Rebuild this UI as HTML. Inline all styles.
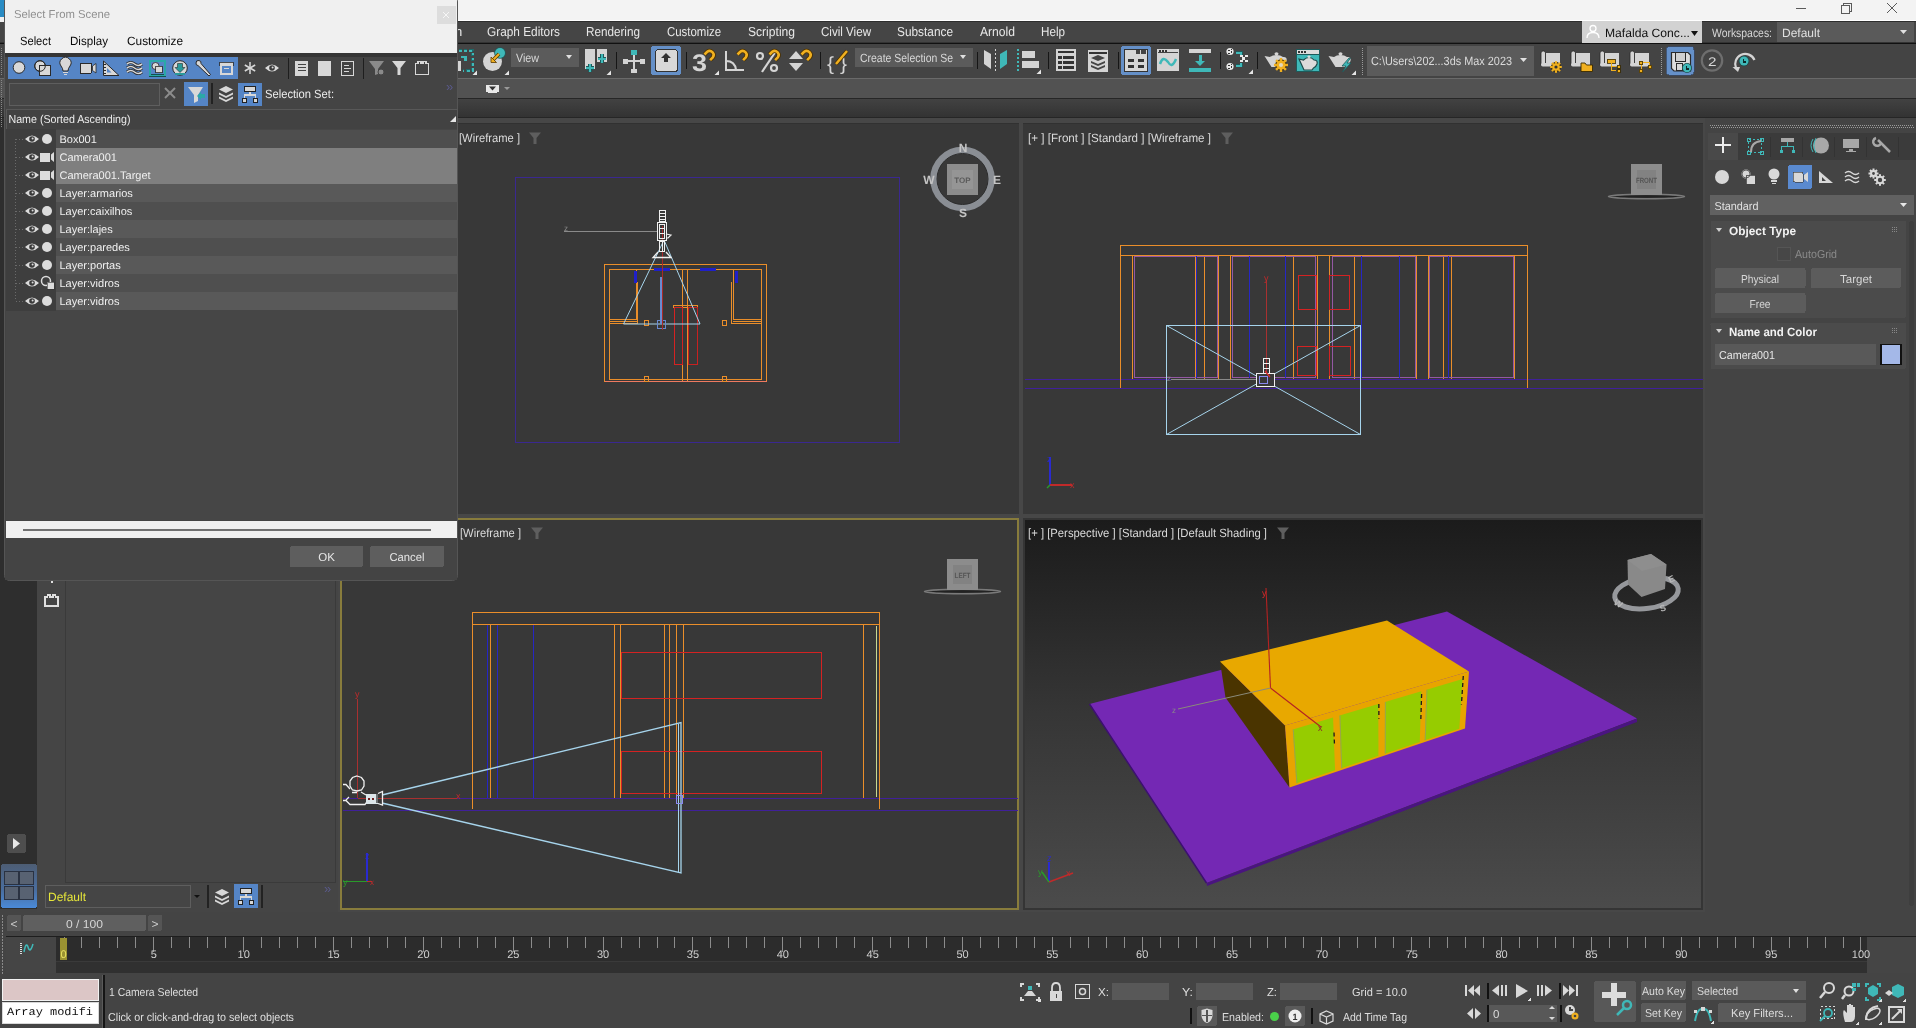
<!DOCTYPE html>
<html><head><meta charset="utf-8"><title>3ds Max</title>
<style>html,body{margin:0;padding:0;width:1916px;height:1028px;overflow:hidden;background:#444}svg{display:block}text{white-space:pre}svg{will-change:transform}</style></head>
<body><svg width="1916" height="1028" viewBox="0 0 1916 1028" shape-rendering="crispEdges" text-rendering="geometricPrecision">
<rect x="0" y="0" width="1916" height="1028" fill="#444444" />
<rect x="0" y="0" width="1916" height="21" fill="#f3f3f3" />
<line x1="1796" y1="8.5" x2="1806" y2="8.5" stroke="#5a5a5a" stroke-width="1" />
<rect x="1841.5" y="5.5" width="8" height="8" fill="none" stroke="#5a5a5a" stroke-width="1" />
<polyline points="1843.5,5.5 1843.5,3.5 1851.5,3.5 1851.5,11.5 1849.5,11.5" fill="none" stroke="#5a5a5a" stroke-width="1" />
<line x1="1887" y1="3" x2="1897" y2="13" stroke="#5a5a5a" stroke-width="1" shape-rendering="geometricPrecision"/>
<line x1="1897" y1="3" x2="1887" y2="13" stroke="#5a5a5a" stroke-width="1" shape-rendering="geometricPrecision"/>
<rect x="0" y="20" width="1916" height="1" fill="#ffffff" />
<rect x="0" y="21" width="1916" height="22" fill="#454545" />
<rect x="0" y="21" width="1916" height="1" fill="#2e2e2e" />
<rect x="0" y="42" width="1916" height="1" fill="#333333" />
<rect x="0" y="43" width="1916" height="1" fill="#111111" />
<rect x="0" y="44" width="1916" height="34" fill="#444444" />
<rect x="0" y="78" width="1916" height="1" fill="#6a6a6a" />
<rect x="0" y="79" width="1916" height="19" fill="#525252" />
<rect x="0" y="98" width="1916" height="1" fill="#262626" />
<defs><linearGradient id="r3" x1="0" y1="0" x2="0" y2="1"><stop offset="0" stop-color="#424242"/><stop offset="1" stop-color="#333333"/></linearGradient></defs>
<rect x="0" y="99" width="1916" height="18" fill="url(#r3)" />
<rect x="0" y="117" width="1916" height="1" fill="#262626" />
<rect x="0" y="118" width="37" height="791" fill="#2e2e2e" />
<rect x="37" y="118" width="303" height="794" fill="#454545" />
<rect x="65" y="118" width="1" height="764" fill="#3b3b3b" />
<rect x="338" y="118" width="1367" height="794" fill="#474747" />
<rect x="342" y="123" width="677" height="391" fill="#383838" />
<rect x="1023" y="123" width="680" height="391" fill="#383838" />
<rect x="342" y="123" width="677" height="1" fill="#313131" />
<rect x="1023" y="123" width="680" height="1" fill="#313131" />
<rect x="340" y="518" width="679" height="392" fill="#383838" />
<rect x="341" y="519" width="677" height="390" fill="none" stroke="#887c3c" stroke-width="2" />
<defs><linearGradient id="pg" x1="0" y1="0" x2="0" y2="1"><stop offset="0" stop-color="#1b1b1b"/><stop offset="0.5" stop-color="#363636"/><stop offset="1" stop-color="#4b4b4b"/></linearGradient></defs>
<rect x="1023" y="518" width="680" height="392" fill="#353535" />
<rect x="1025" y="520" width="676" height="388" fill="url(#pg)" />
<rect x="1705" y="118" width="211" height="818" fill="#444444" />
<rect x="0" y="912" width="1916" height="24" fill="#444444" />
<rect x="0" y="936" width="1916" height="37" fill="#444444" />
<rect x="6" y="936" width="1910" height="1" fill="#1e1e1e" />
<rect x="56" y="937" width="1860" height="25" fill="#2c2c2c" />
<rect x="56" y="962" width="1860" height="11" fill="#303030" />
<rect x="0" y="973" width="1916" height="55" fill="#444444" />
<text x="455" y="36.3" fill="#e8e8e8" font-size="13" font-family="Liberation Sans" font-weight="normal" text-anchor="start" >n</text>
<text x="487" y="36.3" fill="#e8e8e8" font-size="13" font-family="Liberation Sans" font-weight="normal" text-anchor="start" textLength="73" lengthAdjust="spacingAndGlyphs" >Graph Editors</text>
<text x="586" y="36.3" fill="#e8e8e8" font-size="13" font-family="Liberation Sans" font-weight="normal" text-anchor="start" textLength="54" lengthAdjust="spacingAndGlyphs" >Rendering</text>
<text x="667" y="36.3" fill="#e8e8e8" font-size="13" font-family="Liberation Sans" font-weight="normal" text-anchor="start" textLength="54" lengthAdjust="spacingAndGlyphs" >Customize</text>
<text x="748" y="36.3" fill="#e8e8e8" font-size="13" font-family="Liberation Sans" font-weight="normal" text-anchor="start" textLength="47" lengthAdjust="spacingAndGlyphs" >Scripting</text>
<text x="821" y="36.3" fill="#e8e8e8" font-size="13" font-family="Liberation Sans" font-weight="normal" text-anchor="start" textLength="50" lengthAdjust="spacingAndGlyphs" >Civil View</text>
<text x="897" y="36.3" fill="#e8e8e8" font-size="13" font-family="Liberation Sans" font-weight="normal" text-anchor="start" textLength="56" lengthAdjust="spacingAndGlyphs" >Substance</text>
<text x="980" y="36.3" fill="#e8e8e8" font-size="13" font-family="Liberation Sans" font-weight="normal" text-anchor="start" textLength="35" lengthAdjust="spacingAndGlyphs" >Arnold</text>
<text x="1041" y="36.3" fill="#e8e8e8" font-size="13" font-family="Liberation Sans" font-weight="normal" text-anchor="start" textLength="24" lengthAdjust="spacingAndGlyphs" >Help</text>
<rect x="1582" y="21" width="120" height="22" fill="#d2d2d2" />
<circle cx="1593" cy="28.5" r="3" fill="none" stroke="#ffffff" stroke-width="1.3" shape-rendering="geometricPrecision"/>
<path d="M1587,38 Q1587,32.5 1593,32.5 Q1599,32.5 1599,38" fill="none" stroke="#ffffff" stroke-width="1.3" shape-rendering="geometricPrecision"/>
<text x="1605" y="37" fill="#111111" font-size="12" font-family="Liberation Sans" font-weight="normal" text-anchor="start" textLength="85" lengthAdjust="spacingAndGlyphs" >Mafalda Conc...</text>
<polygon points="1691,31 1698,31 1694.5,36" fill="#111111" stroke="none" stroke-width="1" shape-rendering="geometricPrecision"/>
<text x="1712" y="37" fill="#d6d6d6" font-size="12" font-family="Liberation Sans" font-weight="normal" text-anchor="start" textLength="60" lengthAdjust="spacingAndGlyphs" >Workspaces:</text>
<rect x="1777" y="22" width="137" height="20" fill="#5a5a5a" />
<text x="1782" y="37" fill="#e0e0e0" font-size="12" font-family="Liberation Sans" font-weight="normal" text-anchor="start" textLength="38" lengthAdjust="spacingAndGlyphs" >Default</text>
<polygon points="1900,30 1907,30 1903.5,34" fill="#e0e0e0" stroke="none" stroke-width="1" shape-rendering="geometricPrecision"/>
<rect x="457" y="61" width="4" height="10" fill="#d4d4d4" />
<path d="M459,50.5 H472.5 V70.5 H463" fill="none" stroke="#1e6a6a" stroke-width="3.2" stroke-dasharray="3.2,2"/>
<path d="M459,50.5 H472.5 V70.5 H463" fill="none" stroke="#3fb8b8" stroke-width="2" stroke-dasharray="2.5,2.7"/>
<path d="M461,57 H465.5 V61" fill="none" stroke="#3fb8b8" stroke-width="2.2" />
<polygon points="477,75 472.5,75 477,70.5" fill="#e6e6e6" stroke="none" stroke-width="1" shape-rendering="geometricPrecision"/>
<circle cx="492.5" cy="61.5" r="9.5" fill="#d4d4d4" stroke="none" stroke-width="1" shape-rendering="geometricPrecision"/>
<circle cx="500" cy="53" r="5.8" fill="#1e5a5a" stroke="none" stroke-width="1" shape-rendering="geometricPrecision"/>
<circle cx="500" cy="53" r="5" fill="#3fb8b8" stroke="none" stroke-width="1" shape-rendering="geometricPrecision"/>
<line x1="499" y1="54" x2="493" y2="60" stroke="#5a3a00" stroke-width="3.5" shape-rendering="geometricPrecision"/>
<line x1="499" y1="54" x2="493" y2="60" stroke="#f0b020" stroke-width="2" shape-rendering="geometricPrecision"/>
<polygon points="491,57 491,62.5 496.5,62.5" fill="#f0b020" stroke="#5a3a00" stroke-width="0.8" shape-rendering="geometricPrecision"/>
<polygon points="509,75 504.5,75 509,70.5" fill="#e6e6e6" stroke="none" stroke-width="1" shape-rendering="geometricPrecision"/>
<rect x="511" y="48" width="68" height="19" fill="#5b5b5b" />
<text x="516" y="62" fill="#d8d8d8" font-size="12" font-family="Liberation Sans" font-weight="normal" text-anchor="start" textLength="23" lengthAdjust="spacingAndGlyphs" >View</text>
<polygon points="566,55 572,55 569,59" fill="#e0e0e0" stroke="none" stroke-width="1" shape-rendering="geometricPrecision"/>
<rect x="585" y="49" width="10" height="20" fill="#d4d4d4" />
<rect x="597" y="49" width="10" height="13" fill="#d4d4d4" />
<path d="M590,64 V72 M586,68 H594" fill="none" stroke="#1e5a5a" stroke-width="3.5" />
<path d="M590,64 V72 M586,68 H594" fill="none" stroke="#3fb8b8" stroke-width="2" />
<path d="M602,54 V63 M598,58.5 H606" fill="none" stroke="#1e5a5a" stroke-width="3.5" />
<path d="M602,54 V63 M598,58.5 H606" fill="none" stroke="#3fb8b8" stroke-width="2" />
<polygon points="611,75 606.5,75 611,70.5" fill="#e6e6e6" stroke="none" stroke-width="1" shape-rendering="geometricPrecision"/>
<rect x="615.5" y="52" width="1.2" height="17" fill="#161616" />
<line x1="634" y1="52" x2="634" y2="72" stroke="#d4d4d4" stroke-width="2" />
<line x1="624" y1="61" x2="644" y2="61" stroke="#d4d4d4" stroke-width="2" />
<rect x="631" y="50" width="6" height="5" fill="#3fb8b8" />
<rect x="623" y="59" width="5" height="5" fill="#d4d4d4" />
<rect x="640" y="59" width="5" height="5" fill="#d4d4d4" />
<rect x="631" y="69" width="6" height="4" fill="#d4d4d4" />
<rect x="651" y="46" width="30" height="29" rx="3" fill="#6590c8"/>
<rect x="655.5" y="49.5" width="22" height="22" rx="3" fill="#d8d8d8" stroke="#333" stroke-width="1"/>
<polygon points="666,53 671,58 668,58 668,62 664,62 664,58 661,58" fill="#333" stroke="none" stroke-width="1" shape-rendering="geometricPrecision"/>
<rect x="685.5" y="52" width="1.2" height="17" fill="#161616" />
<text x="692" y="71" fill="#d4d4d4" font-size="24" font-family="Liberation Sans" font-weight="bold" text-anchor="start" textLength="15" lengthAdjust="spacingAndGlyphs" >3</text>
<path d="M704.5,54.5 L707.2,51.8 A4,4 0 0 1 712.8,57.4 L710.1,60.1" fill="none" stroke="#4a3000" stroke-width="4.2" shape-rendering="geometricPrecision" stroke-linecap="butt"/>
<path d="M704.5,54.5 L707.2,51.8 A4,4 0 0 1 712.8,57.4 L710.1,60.1" fill="none" stroke="#f0b020" stroke-width="2.6" shape-rendering="geometricPrecision" stroke-linecap="butt"/>
<polygon points="719,75 714.5,75 719,70.5" fill="#e6e6e6" stroke="none" stroke-width="1" shape-rendering="geometricPrecision"/>
<path d="M726,51 V70 H744" fill="none" stroke="#d4d4d4" stroke-width="2.2" />
<path d="M726,61 Q735,61 736,70" fill="none" stroke="#d4d4d4" stroke-width="2.2" shape-rendering="geometricPrecision"/>
<path d="M737.5,54.5 L740.2,51.8 A4,4 0 0 1 745.8,57.4 L743.1,60.1" fill="none" stroke="#4a3000" stroke-width="4.2" shape-rendering="geometricPrecision" stroke-linecap="butt"/>
<path d="M737.5,54.5 L740.2,51.8 A4,4 0 0 1 745.8,57.4 L743.1,60.1" fill="none" stroke="#f0b020" stroke-width="2.6" shape-rendering="geometricPrecision" stroke-linecap="butt"/>
<circle cx="760" cy="56" r="3" fill="none" stroke="#d4d4d4" stroke-width="2.2" shape-rendering="geometricPrecision"/>
<circle cx="774" cy="68" r="3" fill="none" stroke="#d4d4d4" stroke-width="2.2" shape-rendering="geometricPrecision"/>
<line x1="762" y1="72" x2="776" y2="51" stroke="#d4d4d4" stroke-width="2.2" shape-rendering="geometricPrecision"/>
<path d="M769.5,54.5 L772.2,51.8 A4,4 0 0 1 777.8,57.4 L775.1,60.1" fill="none" stroke="#4a3000" stroke-width="4.2" shape-rendering="geometricPrecision" stroke-linecap="butt"/>
<path d="M769.5,54.5 L772.2,51.8 A4,4 0 0 1 777.8,57.4 L775.1,60.1" fill="none" stroke="#f0b020" stroke-width="2.6" shape-rendering="geometricPrecision" stroke-linecap="butt"/>
<polygon points="796,51 803,59 789,59" fill="#d4d4d4" stroke="none" stroke-width="1" shape-rendering="geometricPrecision"/>
<polygon points="789,63 803,63 796,71" fill="#d4d4d4" stroke="none" stroke-width="1" shape-rendering="geometricPrecision"/>
<path d="M801.5,54.5 L804.2,51.8 A4,4 0 0 1 809.8,57.4 L807.1,60.1" fill="none" stroke="#4a3000" stroke-width="4.2" shape-rendering="geometricPrecision" stroke-linecap="butt"/>
<path d="M801.5,54.5 L804.2,51.8 A4,4 0 0 1 809.8,57.4 L807.1,60.1" fill="none" stroke="#f0b020" stroke-width="2.6" shape-rendering="geometricPrecision" stroke-linecap="butt"/>
<rect x="819.5" y="52" width="1.2" height="17" fill="#161616" />
<text x="827" y="70" fill="#d4d4d4" font-size="19" font-family="Liberation Sans" font-weight="normal" text-anchor="start" textLength="7" lengthAdjust="spacingAndGlyphs" >{</text>
<text x="840" y="70" fill="#d4d4d4" font-size="19" font-family="Liberation Sans" font-weight="normal" text-anchor="start" textLength="7" lengthAdjust="spacingAndGlyphs" >}</text>
<line x1="836" y1="64" x2="847" y2="51" stroke="#4a3000" stroke-width="4" shape-rendering="geometricPrecision"/>
<line x1="836" y1="64" x2="847" y2="51" stroke="#f0b020" stroke-width="2.5" shape-rendering="geometricPrecision"/>
<rect x="855" y="48" width="118" height="19" fill="#5b5b5b" />
<text x="860" y="62" fill="#d8d8d8" font-size="12" font-family="Liberation Sans" font-weight="normal" text-anchor="start" textLength="93" lengthAdjust="spacingAndGlyphs" >Create Selection Se</text>
<polygon points="960,55 966,55 963,59" fill="#e0e0e0" stroke="none" stroke-width="1" shape-rendering="geometricPrecision"/>
<rect x="977" y="52" width="1.2" height="17" fill="#161616" />
<polygon points="984,50 991,54 991,69 984,64" fill="#d4d4d4" stroke="none" stroke-width="1" shape-rendering="geometricPrecision"/>
<line x1="995.5" y1="49" x2="995.5" y2="72" stroke="#d4d4d4" stroke-width="1.5" stroke-dasharray="2,2"/>
<polygon points="1007,50 1000,54 1000,69 1007,64" fill="#3fb8b8" stroke="none" stroke-width="1" shape-rendering="geometricPrecision"/>
<line x1="1018" y1="49" x2="1018" y2="72" stroke="#3fb8b8" stroke-width="1.5" stroke-dasharray="2,2"/>
<rect x="1022" y="51" width="13" height="7" fill="#d4d4d4" />
<rect x="1022" y="61" width="17" height="7" fill="#d4d4d4" />
<polygon points="1041,74 1036.5,74 1041,69.5" fill="#e6e6e6" stroke="none" stroke-width="1" shape-rendering="geometricPrecision"/>
<rect x="1047.5" y="52" width="1.2" height="17" fill="#161616" />
<rect x="1056" y="49" width="20" height="22" fill="#d4d4d4" />
<rect x="1058" y="51" width="16" height="2" fill="#333" />
<rect x="1058" y="56" width="3.5" height="2.5" fill="#333" />
<rect x="1063" y="56" width="11" height="2.5" fill="#333" />
<rect x="1058" y="61" width="3.5" height="2.5" fill="#333" />
<rect x="1063" y="61" width="11" height="2.5" fill="#333" />
<rect x="1058" y="66" width="3.5" height="2.5" fill="#333" />
<rect x="1063" y="66" width="11" height="2.5" fill="#333" />
<rect x="1088" y="50" width="20" height="22" fill="#d4d4d4" />
<rect x="1089" y="52" width="18" height="2" fill="#333" />
<polygon points="1098,55 1105,58 1098,61 1091,58" fill="#444" stroke="none" stroke-width="1" shape-rendering="geometricPrecision"/>
<polygon points="1091,61 1098,64 1105,61 1105,63 1098,66 1091,63" fill="#444" stroke="none" stroke-width="1" shape-rendering="geometricPrecision"/>
<polygon points="1091,65 1098,68 1105,65 1105,67 1098,70 1091,67" fill="#444" stroke="none" stroke-width="1" shape-rendering="geometricPrecision"/>
<rect x="1118" y="52" width="1.2" height="17" fill="#161616" />
<rect x="1121" y="46" width="30" height="29" rx="3" fill="#6590c8"/>
<rect x="1124" y="50" width="24" height="22" fill="#d4d4d4" />
<rect x="1125" y="51" width="22" height="20" fill="#d6d6d6" />
<rect x="1124.5" y="49.5" width="23" height="22" fill="none" stroke="#333" stroke-width="1" />
<rect x="1136" y="50" width="4" height="4" fill="#444" />
<rect x="1141" y="50" width="5" height="4" fill="#444" />
<rect x="1128" y="59" width="6" height="3" fill="#333" />
<rect x="1138" y="59" width="6" height="3" fill="#333" />
<rect x="1128" y="65" width="6" height="3" fill="#333" />
<rect x="1138" y="65" width="6" height="3" fill="#333" />
<rect x="1157" y="49" width="22" height="22" fill="#d4d4d4" />
<rect x="1158" y="52" width="20" height="1" fill="#444" />
<rect x="1159" y="50" width="2" height="2" fill="#333" />
<rect x="1162" y="50" width="2" height="2" fill="#333" />
<rect x="1165" y="50" width="2" height="2" fill="#333" />
<path d="M1160,64 Q1163,55 1168,62 Q1172,69 1176,59" fill="none" stroke="#3fb8b8" stroke-width="2.5" shape-rendering="geometricPrecision"/>
<rect x="1189" y="49" width="22" height="4" fill="#d4d4d4" />
<rect x="1189" y="68" width="22" height="4" fill="#3fb8b8" />
<line x1="1200" y1="55" x2="1200" y2="63" stroke="#3fb8b8" stroke-width="3" />
<polygon points="1195,61 1205,61 1200,66" fill="#3fb8b8" stroke="none" stroke-width="1" shape-rendering="geometricPrecision"/>
<rect x="1220" y="52" width="1.2" height="17" fill="#161616" />
<circle cx="1230" cy="51.5" r="3.6" fill="#e8e8e8" stroke="none" stroke-width="1" shape-rendering="geometricPrecision"/>
<rect x="1228" y="49.5" width="1.5" height="1.5" fill="#333" />
<rect x="1230.5" y="51.0" width="1.5" height="1.5" fill="#333" />
<rect x="1228" y="52.5" width="1.5" height="1.5" fill="#333" />
<rect x="1231" y="48.5" width="1.2" height="1.2" fill="#333" />
<circle cx="1230" cy="66.5" r="3.6" fill="#e8e8e8" stroke="none" stroke-width="1" shape-rendering="geometricPrecision"/>
<rect x="1228" y="64.5" width="1.5" height="1.5" fill="#333" />
<rect x="1230.5" y="66.0" width="1.5" height="1.5" fill="#333" />
<rect x="1228" y="67.5" width="1.5" height="1.5" fill="#333" />
<rect x="1231" y="63.5" width="1.2" height="1.2" fill="#333" />
<path d="M1236,52.5 H1241 V55.5 M1236,65.5 H1241 V62.5" fill="none" stroke="#1e5a5a" stroke-width="3" />
<path d="M1236,52.5 H1241 V55.5 M1236,65.5 H1241 V62.5" fill="none" stroke="#3fb8b8" stroke-width="2" />
<rect x="1239.5" y="54.8" width="3" height="2.4" fill="#e8e8e8" />
<rect x="1244.5" y="54.8" width="3" height="2.4" fill="#e8e8e8" />
<rect x="1242.0" y="57.3" width="3" height="2.4" fill="#e8e8e8" />
<rect x="1239.5" y="59.8" width="3" height="2.4" fill="#e8e8e8" />
<rect x="1244.5" y="59.8" width="3" height="2.4" fill="#e8e8e8" />
<polygon points="1253,74 1248.5,74 1253,69.5" fill="#e6e6e6" stroke="none" stroke-width="1" shape-rendering="geometricPrecision"/>
<rect x="1257" y="52" width="1.2" height="17" fill="#161616" />
<path d="M1264.5,56 L1270.0,57 Q1272.5,55 1276.5,55 Q1280.5,55 1283.0,57 Q1287.5,56.5 1286.5,61 Q1285.5,64 1283.0,65 L1281.0,67 L1271.5,67 Z" fill="#d4d4d4" stroke="none" stroke-width="1" shape-rendering="geometricPrecision"/>
<ellipse cx="1276.5" cy="53.8" rx="2" ry="1.6" fill="#d4d4d4" shape-rendering="geometricPrecision"/>
<circle cx="1281" cy="65" r="5.8" fill="#3a2a00" stroke="none" stroke-width="1" shape-rendering="geometricPrecision"/>
<rect x="1279.8" y="58" width="2.4" height="3" fill="#f0b020" transform="rotate(0 1281 65)" shape-rendering="geometricPrecision"/>
<rect x="1279.8" y="58" width="2.4" height="3" fill="#f0b020" transform="rotate(45 1281 65)" shape-rendering="geometricPrecision"/>
<rect x="1279.8" y="58" width="2.4" height="3" fill="#f0b020" transform="rotate(90 1281 65)" shape-rendering="geometricPrecision"/>
<rect x="1279.8" y="58" width="2.4" height="3" fill="#f0b020" transform="rotate(135 1281 65)" shape-rendering="geometricPrecision"/>
<rect x="1279.8" y="58" width="2.4" height="3" fill="#f0b020" transform="rotate(180 1281 65)" shape-rendering="geometricPrecision"/>
<rect x="1279.8" y="58" width="2.4" height="3" fill="#f0b020" transform="rotate(225 1281 65)" shape-rendering="geometricPrecision"/>
<rect x="1279.8" y="58" width="2.4" height="3" fill="#f0b020" transform="rotate(270 1281 65)" shape-rendering="geometricPrecision"/>
<rect x="1279.8" y="58" width="2.4" height="3" fill="#f0b020" transform="rotate(315 1281 65)" shape-rendering="geometricPrecision"/>
<circle cx="1281" cy="65" r="4.6" fill="#f0b020" stroke="none" stroke-width="1" shape-rendering="geometricPrecision"/>
<circle cx="1281" cy="65" r="2" fill="#e0d8c0" stroke="none" stroke-width="1" shape-rendering="geometricPrecision"/>
<rect x="1296" y="48.5" width="24" height="23" fill="#1e5a5a" />
<rect x="1297" y="49.5" width="22" height="4.5" fill="#dcdcdc" />
<rect x="1298" y="50.5" width="2" height="2.5" fill="#333" />
<rect x="1301" y="50.5" width="2" height="2.5" fill="#333" />
<rect x="1304" y="50.5" width="2" height="2.5" fill="#333" />
<rect x="1297" y="55" width="22" height="16" fill="#3fb8b8" />
<path d="M1299,59 L1303.5,60 Q1306,57.5 1309,57.5 Q1312,57.5 1314,60 Q1318,60 1317,64 Q1316,67 1313.5,68 L1312,70 L1304,70 Z" fill="#dcdcdc" stroke="#1e4a4a" stroke-width="1.2" shape-rendering="geometricPrecision"/>
<ellipse cx="1309" cy="56.8" rx="1.6" ry="1.3" fill="#dcdcdc" shape-rendering="geometricPrecision"/>
<path d="M1328.5,56 L1334.0,57 Q1336.5,55 1340.5,55 Q1344.5,55 1347.0,57 Q1351.5,56.5 1350.5,61 Q1349.5,64 1347.0,65 L1345.0,67 L1335.5,67 Z" fill="#d4d4d4" stroke="none" stroke-width="1" shape-rendering="geometricPrecision"/>
<ellipse cx="1340.5" cy="53.8" rx="2" ry="1.6" fill="#d4d4d4" shape-rendering="geometricPrecision"/>
<polygon points="1349,58 1342,66 1346,66 1342.5,72 1351,63 1347,63 1350.5,58" fill="#3fb8b8" stroke="#1e5a5a" stroke-width="0.8" shape-rendering="geometricPrecision"/>
<polygon points="1356,75 1351.5,75 1356,70.5" fill="#e6e6e6" stroke="none" stroke-width="1" shape-rendering="geometricPrecision"/>
<rect x="1361.5" y="48" width="1.2" height="1.2" fill="#9a9a9a" />
<rect x="1361.5" y="50" width="1.2" height="1.2" fill="#9a9a9a" />
<rect x="1361.5" y="52" width="1.2" height="1.2" fill="#9a9a9a" />
<rect x="1361.5" y="54" width="1.2" height="1.2" fill="#9a9a9a" />
<rect x="1361.5" y="56" width="1.2" height="1.2" fill="#9a9a9a" />
<rect x="1361.5" y="58" width="1.2" height="1.2" fill="#9a9a9a" />
<rect x="1361.5" y="60" width="1.2" height="1.2" fill="#9a9a9a" />
<rect x="1361.5" y="62" width="1.2" height="1.2" fill="#9a9a9a" />
<rect x="1361.5" y="64" width="1.2" height="1.2" fill="#9a9a9a" />
<rect x="1361.5" y="66" width="1.2" height="1.2" fill="#9a9a9a" />
<rect x="1361.5" y="68" width="1.2" height="1.2" fill="#9a9a9a" />
<rect x="1361.5" y="70" width="1.2" height="1.2" fill="#9a9a9a" />
<rect x="1361.5" y="72" width="1.2" height="1.2" fill="#9a9a9a" />
<rect x="1361.5" y="74" width="1.2" height="1.2" fill="#9a9a9a" />
<rect x="1367" y="46" width="167" height="30" fill="#5b5b5b" />
<text x="1371" y="65" fill="#dadada" font-size="12" font-family="Liberation Sans" font-weight="normal" text-anchor="start" textLength="141" lengthAdjust="spacingAndGlyphs" >C:\Users\202...3ds Max 2023</text>
<polygon points="1520,58 1527,58 1523.5,62" fill="#e0e0e0" stroke="none" stroke-width="1" shape-rendering="geometricPrecision"/>
<rect x="1541" y="51" width="4.5" height="15.5" rx="2" fill="#d4d4d4" stroke="#2a2a2a" stroke-width="0.8" shape-rendering="geometricPrecision"/>
<rect x="1546" y="52.5" width="13.5" height="13.5" fill="#d4d4d4" />
<rect x="1541" y="63" width="18.5" height="3.5" rx="1.7" fill="#d4d4d4" shape-rendering="geometricPrecision"/>
<circle cx="1556" cy="67" r="5" fill="#3a2a00" stroke="none" stroke-width="1" shape-rendering="geometricPrecision"/>
<rect x="1555" y="61.2" width="2" height="2.5" fill="#f0b020" transform="rotate(0 1556 67)" shape-rendering="geometricPrecision"/>
<rect x="1555" y="61.2" width="2" height="2.5" fill="#f0b020" transform="rotate(45 1556 67)" shape-rendering="geometricPrecision"/>
<rect x="1555" y="61.2" width="2" height="2.5" fill="#f0b020" transform="rotate(90 1556 67)" shape-rendering="geometricPrecision"/>
<rect x="1555" y="61.2" width="2" height="2.5" fill="#f0b020" transform="rotate(135 1556 67)" shape-rendering="geometricPrecision"/>
<rect x="1555" y="61.2" width="2" height="2.5" fill="#f0b020" transform="rotate(180 1556 67)" shape-rendering="geometricPrecision"/>
<rect x="1555" y="61.2" width="2" height="2.5" fill="#f0b020" transform="rotate(225 1556 67)" shape-rendering="geometricPrecision"/>
<rect x="1555" y="61.2" width="2" height="2.5" fill="#f0b020" transform="rotate(270 1556 67)" shape-rendering="geometricPrecision"/>
<rect x="1555" y="61.2" width="2" height="2.5" fill="#f0b020" transform="rotate(315 1556 67)" shape-rendering="geometricPrecision"/>
<circle cx="1556" cy="67" r="3.8" fill="#f0b020" stroke="none" stroke-width="1" shape-rendering="geometricPrecision"/>
<circle cx="1556" cy="67" r="1.6" fill="#333" stroke="none" stroke-width="1" shape-rendering="geometricPrecision"/>
<rect x="1571" y="51" width="4.5" height="15.5" rx="2" fill="#d4d4d4" stroke="#2a2a2a" stroke-width="0.8" shape-rendering="geometricPrecision"/>
<rect x="1576" y="52.5" width="13.5" height="13.5" fill="#d4d4d4" />
<rect x="1571" y="63" width="18.5" height="3.5" rx="1.7" fill="#d4d4d4" shape-rendering="geometricPrecision"/>
<path d="M1581,63 H1585 L1586.5,65 H1592.5 V71.5 H1581 Z" fill="#f0b020" stroke="#3a2a00" stroke-width="0.9" shape-rendering="geometricPrecision"/>
<rect x="1600" y="51" width="4.5" height="15.5" rx="2" fill="#d4d4d4" stroke="#2a2a2a" stroke-width="0.8" shape-rendering="geometricPrecision"/>
<rect x="1605" y="52.5" width="13.5" height="13.5" fill="#d4d4d4" />
<rect x="1600" y="63" width="18.5" height="3.5" rx="1.7" fill="#d4d4d4" shape-rendering="geometricPrecision"/>
<rect x="1607" y="59" width="8" height="4" fill="#f0b020" stroke="#3a2a00" stroke-width="0.8" />
<path d="M1611,63 V70 H1616 M1611,66 H1616" fill="none" stroke="#f0b020" stroke-width="1" />
<rect x="1617" y="65" width="3" height="3" fill="#f0b020" stroke="#3a2a00" stroke-width="0.8" />
<rect x="1617" y="69.5" width="3" height="3" fill="#f0b020" stroke="#3a2a00" stroke-width="0.8" />
<rect x="1630" y="51" width="4.5" height="15.5" rx="2" fill="#d4d4d4" stroke="#2a2a2a" stroke-width="0.8" shape-rendering="geometricPrecision"/>
<rect x="1635" y="52.5" width="13.5" height="13.5" fill="#d4d4d4" />
<rect x="1630" y="63" width="18.5" height="3.5" rx="1.7" fill="#d4d4d4" shape-rendering="geometricPrecision"/>
<rect x="1639" y="61" width="3.5" height="3.5" fill="#f0b020" stroke="#3a2a00" stroke-width="0.8" />
<rect x="1648" y="65" width="3.5" height="3.5" fill="#f0b020" stroke="#3a2a00" stroke-width="0.8" />
<rect x="1639" y="69" width="3.5" height="3.5" fill="#f0b020" stroke="#3a2a00" stroke-width="0.8" />
<path d="M1641,65 V69 M1642.5,62.5 H1649.5 V65" fill="none" stroke="#f0b020" stroke-width="1" />
<rect x="1660.5" y="48" width="1.2" height="1.2" fill="#9a9a9a" />
<rect x="1660.5" y="50" width="1.2" height="1.2" fill="#9a9a9a" />
<rect x="1660.5" y="52" width="1.2" height="1.2" fill="#9a9a9a" />
<rect x="1660.5" y="54" width="1.2" height="1.2" fill="#9a9a9a" />
<rect x="1660.5" y="56" width="1.2" height="1.2" fill="#9a9a9a" />
<rect x="1660.5" y="58" width="1.2" height="1.2" fill="#9a9a9a" />
<rect x="1660.5" y="60" width="1.2" height="1.2" fill="#9a9a9a" />
<rect x="1660.5" y="62" width="1.2" height="1.2" fill="#9a9a9a" />
<rect x="1660.5" y="64" width="1.2" height="1.2" fill="#9a9a9a" />
<rect x="1660.5" y="66" width="1.2" height="1.2" fill="#9a9a9a" />
<rect x="1660.5" y="68" width="1.2" height="1.2" fill="#9a9a9a" />
<rect x="1660.5" y="70" width="1.2" height="1.2" fill="#9a9a9a" />
<rect x="1660.5" y="72" width="1.2" height="1.2" fill="#9a9a9a" />
<rect x="1660.5" y="74" width="1.2" height="1.2" fill="#9a9a9a" />
<rect x="1666" y="46.5" width="28" height="28.5" rx="3" fill="#6590c8" stroke="#3a4a66" stroke-width="0.8"/>
<path d="M1671.5,52.5 H1688 L1690.5,55 V71 H1674 L1671.5,68.5 Z" fill="#dcdcdc" stroke="#2a2a2a" stroke-width="1.2" shape-rendering="geometricPrecision"/>
<rect x="1675.5" y="52.5" width="10" height="8.5" fill="#d0d0d0" stroke="#2a2a2a" stroke-width="1"/>
<rect x="1676.5" y="63.5" width="6" height="6.5" fill="#d8d8d8" stroke="#2a2a2a" stroke-width="1"/>
<circle cx="1687" cy="68" r="5" fill="#1e4a4a" stroke="none" stroke-width="1" shape-rendering="geometricPrecision"/>
<circle cx="1687" cy="68" r="4.2" fill="#3fb8b8" stroke="none" stroke-width="1" shape-rendering="geometricPrecision"/>
<path d="M1686.5,65.5 V69 H1689" fill="none" stroke="#102a2a" stroke-width="1.4" />
<circle cx="1712" cy="60.5" r="10.2" fill="none" stroke="#6e6e6e" stroke-width="2.2" shape-rendering="geometricPrecision"/>
<text x="1708" y="65.5" fill="#d8d8d8" font-size="12.5" font-family="Liberation Sans" font-weight="normal" text-anchor="start" textLength="8.5" lengthAdjust="spacingAndGlyphs" >2</text>
<path d="M1736,68 A10,10 0 1 1 1754.5,60" fill="none" stroke="#d4d4d4" stroke-width="2.2" shape-rendering="geometricPrecision"/>
<polygon points="1732.5,67 1740,67 1738,72" fill="#d4d4d4" stroke="none" stroke-width="1" shape-rendering="geometricPrecision"/>
<circle cx="1744" cy="61" r="5.3" fill="#1e4a4a" stroke="none" stroke-width="1" shape-rendering="geometricPrecision"/>
<circle cx="1744" cy="61" r="4.5" fill="#3fb8b8" stroke="none" stroke-width="1" shape-rendering="geometricPrecision"/>
<path d="M1743.5,58.5 V62 H1746" fill="none" stroke="#102a2a" stroke-width="1.4" />
<rect x="486" y="84.5" width="13" height="8" rx="2" fill="#e8e8e8"/>
<polygon points="489,86.5 496,86.5 492.5,90.5" fill="#333" stroke="none" stroke-width="1" shape-rendering="geometricPrecision"/>
<polygon points="504,87 510,87 507,90" fill="#9a9a9a" stroke="none" stroke-width="1" shape-rendering="geometricPrecision"/>
<rect x="1710" y="125" width="1" height="1" fill="#9a9a9a" />
<rect x="1711" y="127" width="1" height="1" fill="#9a9a9a" />
<rect x="1712" y="125" width="1" height="1" fill="#9a9a9a" />
<rect x="1713" y="127" width="1" height="1" fill="#9a9a9a" />
<rect x="1714" y="125" width="1" height="1" fill="#9a9a9a" />
<rect x="1715" y="127" width="1" height="1" fill="#9a9a9a" />
<rect x="1716" y="125" width="1" height="1" fill="#9a9a9a" />
<rect x="1717" y="127" width="1" height="1" fill="#9a9a9a" />
<rect x="1718" y="125" width="1" height="1" fill="#9a9a9a" />
<rect x="1719" y="127" width="1" height="1" fill="#9a9a9a" />
<rect x="1720" y="125" width="1" height="1" fill="#9a9a9a" />
<rect x="1721" y="127" width="1" height="1" fill="#9a9a9a" />
<rect x="1722" y="125" width="1" height="1" fill="#9a9a9a" />
<rect x="1723" y="127" width="1" height="1" fill="#9a9a9a" />
<rect x="1724" y="125" width="1" height="1" fill="#9a9a9a" />
<rect x="1725" y="127" width="1" height="1" fill="#9a9a9a" />
<rect x="1726" y="125" width="1" height="1" fill="#9a9a9a" />
<rect x="1727" y="127" width="1" height="1" fill="#9a9a9a" />
<rect x="1728" y="125" width="1" height="1" fill="#9a9a9a" />
<rect x="1729" y="127" width="1" height="1" fill="#9a9a9a" />
<rect x="1730" y="125" width="1" height="1" fill="#9a9a9a" />
<rect x="1731" y="127" width="1" height="1" fill="#9a9a9a" />
<rect x="1732" y="125" width="1" height="1" fill="#9a9a9a" />
<rect x="1733" y="127" width="1" height="1" fill="#9a9a9a" />
<rect x="1734" y="125" width="1" height="1" fill="#9a9a9a" />
<rect x="1735" y="127" width="1" height="1" fill="#9a9a9a" />
<rect x="1736" y="125" width="1" height="1" fill="#9a9a9a" />
<rect x="1737" y="127" width="1" height="1" fill="#9a9a9a" />
<rect x="1738" y="125" width="1" height="1" fill="#9a9a9a" />
<rect x="1739" y="127" width="1" height="1" fill="#9a9a9a" />
<rect x="1740" y="125" width="1" height="1" fill="#9a9a9a" />
<rect x="1741" y="127" width="1" height="1" fill="#9a9a9a" />
<rect x="1742" y="125" width="1" height="1" fill="#9a9a9a" />
<rect x="1743" y="127" width="1" height="1" fill="#9a9a9a" />
<rect x="1744" y="125" width="1" height="1" fill="#9a9a9a" />
<rect x="1745" y="127" width="1" height="1" fill="#9a9a9a" />
<rect x="1746" y="125" width="1" height="1" fill="#9a9a9a" />
<rect x="1747" y="127" width="1" height="1" fill="#9a9a9a" />
<rect x="1748" y="125" width="1" height="1" fill="#9a9a9a" />
<rect x="1749" y="127" width="1" height="1" fill="#9a9a9a" />
<rect x="1750" y="125" width="1" height="1" fill="#9a9a9a" />
<rect x="1751" y="127" width="1" height="1" fill="#9a9a9a" />
<rect x="1752" y="125" width="1" height="1" fill="#9a9a9a" />
<rect x="1753" y="127" width="1" height="1" fill="#9a9a9a" />
<rect x="1754" y="125" width="1" height="1" fill="#9a9a9a" />
<rect x="1755" y="127" width="1" height="1" fill="#9a9a9a" />
<rect x="1756" y="125" width="1" height="1" fill="#9a9a9a" />
<rect x="1757" y="127" width="1" height="1" fill="#9a9a9a" />
<rect x="1758" y="125" width="1" height="1" fill="#9a9a9a" />
<rect x="1759" y="127" width="1" height="1" fill="#9a9a9a" />
<rect x="1760" y="125" width="1" height="1" fill="#9a9a9a" />
<rect x="1761" y="127" width="1" height="1" fill="#9a9a9a" />
<rect x="1762" y="125" width="1" height="1" fill="#9a9a9a" />
<rect x="1763" y="127" width="1" height="1" fill="#9a9a9a" />
<rect x="1764" y="125" width="1" height="1" fill="#9a9a9a" />
<rect x="1765" y="127" width="1" height="1" fill="#9a9a9a" />
<rect x="1766" y="125" width="1" height="1" fill="#9a9a9a" />
<rect x="1767" y="127" width="1" height="1" fill="#9a9a9a" />
<rect x="1768" y="125" width="1" height="1" fill="#9a9a9a" />
<rect x="1769" y="127" width="1" height="1" fill="#9a9a9a" />
<rect x="1770" y="125" width="1" height="1" fill="#9a9a9a" />
<rect x="1771" y="127" width="1" height="1" fill="#9a9a9a" />
<rect x="1772" y="125" width="1" height="1" fill="#9a9a9a" />
<rect x="1773" y="127" width="1" height="1" fill="#9a9a9a" />
<rect x="1774" y="125" width="1" height="1" fill="#9a9a9a" />
<rect x="1775" y="127" width="1" height="1" fill="#9a9a9a" />
<rect x="1776" y="125" width="1" height="1" fill="#9a9a9a" />
<rect x="1777" y="127" width="1" height="1" fill="#9a9a9a" />
<rect x="1778" y="125" width="1" height="1" fill="#9a9a9a" />
<rect x="1779" y="127" width="1" height="1" fill="#9a9a9a" />
<rect x="1780" y="125" width="1" height="1" fill="#9a9a9a" />
<rect x="1781" y="127" width="1" height="1" fill="#9a9a9a" />
<rect x="1782" y="125" width="1" height="1" fill="#9a9a9a" />
<rect x="1783" y="127" width="1" height="1" fill="#9a9a9a" />
<rect x="1784" y="125" width="1" height="1" fill="#9a9a9a" />
<rect x="1785" y="127" width="1" height="1" fill="#9a9a9a" />
<rect x="1786" y="125" width="1" height="1" fill="#9a9a9a" />
<rect x="1787" y="127" width="1" height="1" fill="#9a9a9a" />
<rect x="1788" y="125" width="1" height="1" fill="#9a9a9a" />
<rect x="1789" y="127" width="1" height="1" fill="#9a9a9a" />
<rect x="1790" y="125" width="1" height="1" fill="#9a9a9a" />
<rect x="1791" y="127" width="1" height="1" fill="#9a9a9a" />
<rect x="1792" y="125" width="1" height="1" fill="#9a9a9a" />
<rect x="1793" y="127" width="1" height="1" fill="#9a9a9a" />
<rect x="1794" y="125" width="1" height="1" fill="#9a9a9a" />
<rect x="1795" y="127" width="1" height="1" fill="#9a9a9a" />
<rect x="1796" y="125" width="1" height="1" fill="#9a9a9a" />
<rect x="1797" y="127" width="1" height="1" fill="#9a9a9a" />
<rect x="1798" y="125" width="1" height="1" fill="#9a9a9a" />
<rect x="1799" y="127" width="1" height="1" fill="#9a9a9a" />
<rect x="1800" y="125" width="1" height="1" fill="#9a9a9a" />
<rect x="1801" y="127" width="1" height="1" fill="#9a9a9a" />
<rect x="1802" y="125" width="1" height="1" fill="#9a9a9a" />
<rect x="1803" y="127" width="1" height="1" fill="#9a9a9a" />
<rect x="1804" y="125" width="1" height="1" fill="#9a9a9a" />
<rect x="1805" y="127" width="1" height="1" fill="#9a9a9a" />
<rect x="1806" y="125" width="1" height="1" fill="#9a9a9a" />
<rect x="1807" y="127" width="1" height="1" fill="#9a9a9a" />
<rect x="1808" y="125" width="1" height="1" fill="#9a9a9a" />
<rect x="1809" y="127" width="1" height="1" fill="#9a9a9a" />
<rect x="1810" y="125" width="1" height="1" fill="#9a9a9a" />
<rect x="1811" y="127" width="1" height="1" fill="#9a9a9a" />
<rect x="1812" y="125" width="1" height="1" fill="#9a9a9a" />
<rect x="1813" y="127" width="1" height="1" fill="#9a9a9a" />
<rect x="1814" y="125" width="1" height="1" fill="#9a9a9a" />
<rect x="1815" y="127" width="1" height="1" fill="#9a9a9a" />
<rect x="1816" y="125" width="1" height="1" fill="#9a9a9a" />
<rect x="1817" y="127" width="1" height="1" fill="#9a9a9a" />
<rect x="1818" y="125" width="1" height="1" fill="#9a9a9a" />
<rect x="1819" y="127" width="1" height="1" fill="#9a9a9a" />
<rect x="1820" y="125" width="1" height="1" fill="#9a9a9a" />
<rect x="1821" y="127" width="1" height="1" fill="#9a9a9a" />
<rect x="1822" y="125" width="1" height="1" fill="#9a9a9a" />
<rect x="1823" y="127" width="1" height="1" fill="#9a9a9a" />
<rect x="1824" y="125" width="1" height="1" fill="#9a9a9a" />
<rect x="1825" y="127" width="1" height="1" fill="#9a9a9a" />
<rect x="1826" y="125" width="1" height="1" fill="#9a9a9a" />
<rect x="1827" y="127" width="1" height="1" fill="#9a9a9a" />
<rect x="1828" y="125" width="1" height="1" fill="#9a9a9a" />
<rect x="1829" y="127" width="1" height="1" fill="#9a9a9a" />
<rect x="1830" y="125" width="1" height="1" fill="#9a9a9a" />
<rect x="1831" y="127" width="1" height="1" fill="#9a9a9a" />
<rect x="1832" y="125" width="1" height="1" fill="#9a9a9a" />
<rect x="1833" y="127" width="1" height="1" fill="#9a9a9a" />
<rect x="1834" y="125" width="1" height="1" fill="#9a9a9a" />
<rect x="1835" y="127" width="1" height="1" fill="#9a9a9a" />
<rect x="1836" y="125" width="1" height="1" fill="#9a9a9a" />
<rect x="1837" y="127" width="1" height="1" fill="#9a9a9a" />
<rect x="1838" y="125" width="1" height="1" fill="#9a9a9a" />
<rect x="1839" y="127" width="1" height="1" fill="#9a9a9a" />
<rect x="1840" y="125" width="1" height="1" fill="#9a9a9a" />
<rect x="1841" y="127" width="1" height="1" fill="#9a9a9a" />
<rect x="1842" y="125" width="1" height="1" fill="#9a9a9a" />
<rect x="1843" y="127" width="1" height="1" fill="#9a9a9a" />
<rect x="1844" y="125" width="1" height="1" fill="#9a9a9a" />
<rect x="1845" y="127" width="1" height="1" fill="#9a9a9a" />
<rect x="1846" y="125" width="1" height="1" fill="#9a9a9a" />
<rect x="1847" y="127" width="1" height="1" fill="#9a9a9a" />
<rect x="1848" y="125" width="1" height="1" fill="#9a9a9a" />
<rect x="1849" y="127" width="1" height="1" fill="#9a9a9a" />
<rect x="1850" y="125" width="1" height="1" fill="#9a9a9a" />
<rect x="1851" y="127" width="1" height="1" fill="#9a9a9a" />
<rect x="1852" y="125" width="1" height="1" fill="#9a9a9a" />
<rect x="1853" y="127" width="1" height="1" fill="#9a9a9a" />
<rect x="1854" y="125" width="1" height="1" fill="#9a9a9a" />
<rect x="1855" y="127" width="1" height="1" fill="#9a9a9a" />
<rect x="1856" y="125" width="1" height="1" fill="#9a9a9a" />
<rect x="1857" y="127" width="1" height="1" fill="#9a9a9a" />
<rect x="1858" y="125" width="1" height="1" fill="#9a9a9a" />
<rect x="1859" y="127" width="1" height="1" fill="#9a9a9a" />
<rect x="1860" y="125" width="1" height="1" fill="#9a9a9a" />
<rect x="1861" y="127" width="1" height="1" fill="#9a9a9a" />
<rect x="1862" y="125" width="1" height="1" fill="#9a9a9a" />
<rect x="1863" y="127" width="1" height="1" fill="#9a9a9a" />
<rect x="1864" y="125" width="1" height="1" fill="#9a9a9a" />
<rect x="1865" y="127" width="1" height="1" fill="#9a9a9a" />
<rect x="1866" y="125" width="1" height="1" fill="#9a9a9a" />
<rect x="1867" y="127" width="1" height="1" fill="#9a9a9a" />
<rect x="1868" y="125" width="1" height="1" fill="#9a9a9a" />
<rect x="1869" y="127" width="1" height="1" fill="#9a9a9a" />
<rect x="1870" y="125" width="1" height="1" fill="#9a9a9a" />
<rect x="1871" y="127" width="1" height="1" fill="#9a9a9a" />
<rect x="1872" y="125" width="1" height="1" fill="#9a9a9a" />
<rect x="1873" y="127" width="1" height="1" fill="#9a9a9a" />
<rect x="1874" y="125" width="1" height="1" fill="#9a9a9a" />
<rect x="1875" y="127" width="1" height="1" fill="#9a9a9a" />
<rect x="1876" y="125" width="1" height="1" fill="#9a9a9a" />
<rect x="1877" y="127" width="1" height="1" fill="#9a9a9a" />
<rect x="1878" y="125" width="1" height="1" fill="#9a9a9a" />
<rect x="1879" y="127" width="1" height="1" fill="#9a9a9a" />
<rect x="1880" y="125" width="1" height="1" fill="#9a9a9a" />
<rect x="1881" y="127" width="1" height="1" fill="#9a9a9a" />
<rect x="1882" y="125" width="1" height="1" fill="#9a9a9a" />
<rect x="1883" y="127" width="1" height="1" fill="#9a9a9a" />
<rect x="1884" y="125" width="1" height="1" fill="#9a9a9a" />
<rect x="1885" y="127" width="1" height="1" fill="#9a9a9a" />
<rect x="1886" y="125" width="1" height="1" fill="#9a9a9a" />
<rect x="1887" y="127" width="1" height="1" fill="#9a9a9a" />
<rect x="1888" y="125" width="1" height="1" fill="#9a9a9a" />
<rect x="1889" y="127" width="1" height="1" fill="#9a9a9a" />
<rect x="1890" y="125" width="1" height="1" fill="#9a9a9a" />
<rect x="1891" y="127" width="1" height="1" fill="#9a9a9a" />
<rect x="1892" y="125" width="1" height="1" fill="#9a9a9a" />
<rect x="1893" y="127" width="1" height="1" fill="#9a9a9a" />
<rect x="1894" y="125" width="1" height="1" fill="#9a9a9a" />
<rect x="1895" y="127" width="1" height="1" fill="#9a9a9a" />
<rect x="1896" y="125" width="1" height="1" fill="#9a9a9a" />
<rect x="1897" y="127" width="1" height="1" fill="#9a9a9a" />
<rect x="1898" y="125" width="1" height="1" fill="#9a9a9a" />
<rect x="1899" y="127" width="1" height="1" fill="#9a9a9a" />
<rect x="1900" y="125" width="1" height="1" fill="#9a9a9a" />
<rect x="1901" y="127" width="1" height="1" fill="#9a9a9a" />
<rect x="1902" y="125" width="1" height="1" fill="#9a9a9a" />
<rect x="1903" y="127" width="1" height="1" fill="#9a9a9a" />
<rect x="1904" y="125" width="1" height="1" fill="#9a9a9a" />
<rect x="1905" y="127" width="1" height="1" fill="#9a9a9a" />
<rect x="1906" y="125" width="1" height="1" fill="#9a9a9a" />
<rect x="1907" y="127" width="1" height="1" fill="#9a9a9a" />
<rect x="1908" y="125" width="1" height="1" fill="#9a9a9a" />
<rect x="1909" y="127" width="1" height="1" fill="#9a9a9a" />
<rect x="1910" y="125" width="1" height="1" fill="#9a9a9a" />
<rect x="1911" y="127" width="1" height="1" fill="#9a9a9a" />
<rect x="1912" y="125" width="1" height="1" fill="#9a9a9a" />
<rect x="1913" y="127" width="1" height="1" fill="#9a9a9a" />
<rect x="1708" y="133" width="208" height="27" fill="#3b3b3b" />
<rect x="1708" y="133" width="30" height="27" fill="#494949" />
<rect x="1770" y="137" width="1" height="20" fill="#333" />
<rect x="1802" y="137" width="1" height="20" fill="#333" />
<rect x="1834" y="137" width="1" height="20" fill="#333" />
<rect x="1866" y="137" width="1" height="20" fill="#333" />
<rect x="1898" y="137" width="1" height="20" fill="#333" />
<rect x="1715" y="144" width="16" height="2" fill="#ececec" />
<rect x="1722" y="137" width="2" height="16" fill="#ececec" />
<rect x="1748.5" y="139.5" width="13" height="13" fill="none" stroke="#3fb8b8" stroke-width="1" stroke-dasharray="2,2"/>
<rect x="1747.5" y="138.5" width="3" height="3" fill="none" stroke="#3fb8b8" stroke-width="1" />
<rect x="1760.5" y="138.5" width="3" height="3" fill="none" stroke="#3fb8b8" stroke-width="1" />
<rect x="1747.5" y="151.5" width="3" height="3" fill="none" stroke="#3fb8b8" stroke-width="1" />
<rect x="1760.5" y="151.5" width="3" height="3" fill="none" stroke="#3fb8b8" stroke-width="1" />
<path d="M1751,152 Q1751,142 1761,141" fill="none" stroke="#a8a8a8" stroke-width="2" shape-rendering="geometricPrecision"/>
<rect x="1781" y="138" width="13" height="4" fill="#a8a8a8" />
<line x1="1787.5" y1="142" x2="1787.5" y2="146" stroke="#3fb8b8" stroke-width="1.2" />
<path d="M1781.5,152 V146.5 H1793.5 V152" fill="none" stroke="#3fb8b8" stroke-width="1.2" />
<rect x="1780" y="150" width="3" height="3" fill="#3fb8b8" />
<rect x="1792" y="150" width="3" height="3" fill="#3fb8b8" />
<circle cx="1821" cy="145.5" r="8" fill="#a8a8a8" stroke="none" stroke-width="1" shape-rendering="geometricPrecision"/>
<path d="M1813,139 Q1809,145.5 1813,152 M1816,138 Q1812,145.5 1816,153" fill="none" stroke="#3fb8b8" stroke-width="1" shape-rendering="geometricPrecision"/>
<rect x="1843" y="139" width="16" height="9" fill="#a8a8a8" />
<rect x="1849" y="149" width="4" height="2" fill="#a8a8a8" />
<rect x="1846" y="151" width="10" height="1" fill="#a8a8a8" />
<line x1="1878" y1="140" x2="1890" y2="152" stroke="#a8a8a8" stroke-width="2.5" shape-rendering="geometricPrecision"/>
<path d="M1876,138 A4,4 0 1 0 1881,143" fill="none" stroke="#a8a8a8" stroke-width="2.5" shape-rendering="geometricPrecision"/>
<circle cx="1722" cy="177" r="7" fill="#d8d8d8" stroke="none" stroke-width="1" shape-rendering="geometricPrecision"/>
<circle cx="1746" cy="174" r="4.5" fill="#d8d8d8" stroke="none" stroke-width="1" shape-rendering="geometricPrecision"/>
<rect x="1746" y="175" width="9" height="9" fill="#d8d8d8" stroke="#444" stroke-width="0.8"/>
<circle cx="1746" cy="174" r="4" fill="none" stroke="#444" stroke-width="0.8" shape-rendering="geometricPrecision"/>
<circle cx="1774" cy="174" r="5.5" fill="#d8d8d8" stroke="none" stroke-width="1" shape-rendering="geometricPrecision"/>
<rect x="1771" y="180" width="6" height="1.5" fill="#d8d8d8" />
<rect x="1772" y="182.5" width="4" height="1.5" fill="#d8d8d8" />
<rect x="1788" y="165" width="24" height="24" rx="2" fill="#5a8ad0"/>
<rect x="1793" y="172" width="10" height="10" rx="1.5" fill="#d8d8d8" stroke="#333" stroke-width="0.6"/>
<polygon points="1804,175 1808,172 1808,182 1804,179" fill="#d8d8d8" stroke="none" stroke-width="1" shape-rendering="geometricPrecision"/>
<polygon points="1819,171 1819,183 1833,183" fill="#d8d8d8" stroke="none" stroke-width="1" shape-rendering="geometricPrecision"/>
<polygon points="1822,177 1822,181 1826,181" fill="#444" stroke="none" stroke-width="1" shape-rendering="geometricPrecision"/>
<path d="M1845,173 q3.5,-3 7,0 t7,0" fill="none" stroke="#d8d8d8" stroke-width="1.4" shape-rendering="geometricPrecision"/>
<path d="M1845,177 q3.5,-3 7,0 t7,0" fill="none" stroke="#d8d8d8" stroke-width="1.4" shape-rendering="geometricPrecision"/>
<path d="M1845,181 q3.5,-3 7,0 t7,0" fill="none" stroke="#d8d8d8" stroke-width="1.4" shape-rendering="geometricPrecision"/>
<rect x="1872.5" y="168.5" width="2" height="2.5" fill="#d8d8d8" transform="rotate(0 1873.5 173.5)" shape-rendering="geometricPrecision"/>
<rect x="1872.5" y="168.5" width="2" height="2.5" fill="#d8d8d8" transform="rotate(45 1873.5 173.5)" shape-rendering="geometricPrecision"/>
<rect x="1872.5" y="168.5" width="2" height="2.5" fill="#d8d8d8" transform="rotate(90 1873.5 173.5)" shape-rendering="geometricPrecision"/>
<rect x="1872.5" y="168.5" width="2" height="2.5" fill="#d8d8d8" transform="rotate(135 1873.5 173.5)" shape-rendering="geometricPrecision"/>
<rect x="1872.5" y="168.5" width="2" height="2.5" fill="#d8d8d8" transform="rotate(180 1873.5 173.5)" shape-rendering="geometricPrecision"/>
<rect x="1872.5" y="168.5" width="2" height="2.5" fill="#d8d8d8" transform="rotate(225 1873.5 173.5)" shape-rendering="geometricPrecision"/>
<rect x="1872.5" y="168.5" width="2" height="2.5" fill="#d8d8d8" transform="rotate(270 1873.5 173.5)" shape-rendering="geometricPrecision"/>
<rect x="1872.5" y="168.5" width="2" height="2.5" fill="#d8d8d8" transform="rotate(315 1873.5 173.5)" shape-rendering="geometricPrecision"/>
<circle cx="1873.5" cy="173.5" r="2.4" fill="none" stroke="#d8d8d8" stroke-width="2" shape-rendering="geometricPrecision"/>
<rect x="1879" y="174.2" width="2" height="2.5" fill="#d8d8d8" transform="rotate(0 1880 180)" shape-rendering="geometricPrecision"/>
<rect x="1879" y="174.2" width="2" height="2.5" fill="#d8d8d8" transform="rotate(45 1880 180)" shape-rendering="geometricPrecision"/>
<rect x="1879" y="174.2" width="2" height="2.5" fill="#d8d8d8" transform="rotate(90 1880 180)" shape-rendering="geometricPrecision"/>
<rect x="1879" y="174.2" width="2" height="2.5" fill="#d8d8d8" transform="rotate(135 1880 180)" shape-rendering="geometricPrecision"/>
<rect x="1879" y="174.2" width="2" height="2.5" fill="#d8d8d8" transform="rotate(180 1880 180)" shape-rendering="geometricPrecision"/>
<rect x="1879" y="174.2" width="2" height="2.5" fill="#d8d8d8" transform="rotate(225 1880 180)" shape-rendering="geometricPrecision"/>
<rect x="1879" y="174.2" width="2" height="2.5" fill="#d8d8d8" transform="rotate(270 1880 180)" shape-rendering="geometricPrecision"/>
<rect x="1879" y="174.2" width="2" height="2.5" fill="#d8d8d8" transform="rotate(315 1880 180)" shape-rendering="geometricPrecision"/>
<circle cx="1880" cy="180" r="3.1999999999999997" fill="none" stroke="#d8d8d8" stroke-width="2" shape-rendering="geometricPrecision"/>
<rect x="1710" y="195" width="204" height="20" fill="#616161" />
<text x="1714.5" y="209.5" fill="#e0e0e0" font-size="11.5" font-family="Liberation Sans" font-weight="normal" text-anchor="start" textLength="44" lengthAdjust="spacingAndGlyphs" >Standard</text>
<polygon points="1900,203 1907,203 1903.5,207" fill="#e8e8e8" stroke="none" stroke-width="1" shape-rendering="geometricPrecision"/>
<rect x="1710.5" y="221" width="195.5" height="97" rx="2" fill="#4b4b4b"/>
<polygon points="1716,228 1722,228 1719,232" fill="#cfcfcf" stroke="none" stroke-width="1" shape-rendering="geometricPrecision"/>
<text x="1729" y="235" fill="#f2f2f2" font-size="12" font-family="Liberation Sans" font-weight="bold" text-anchor="start" textLength="67" lengthAdjust="spacingAndGlyphs" >Object Type</text>
<rect x="1892" y="227" width="1" height="1" fill="#888" />
<rect x="1892" y="229" width="1" height="1" fill="#888" />
<rect x="1892" y="231" width="1" height="1" fill="#888" />
<rect x="1894" y="227" width="1" height="1" fill="#888" />
<rect x="1894" y="229" width="1" height="1" fill="#888" />
<rect x="1894" y="231" width="1" height="1" fill="#888" />
<rect x="1896" y="227" width="1" height="1" fill="#888" />
<rect x="1896" y="229" width="1" height="1" fill="#888" />
<rect x="1896" y="231" width="1" height="1" fill="#888" />
<rect x="1777.5" y="247" width="12.5" height="13" fill="#474747" stroke="#555" stroke-width="1"/>
<text x="1795" y="258" fill="#8a8a8a" font-size="11.5" font-family="Liberation Sans" font-weight="normal" text-anchor="start" textLength="42" lengthAdjust="spacingAndGlyphs" >AutoGrid</text>
<rect x="1715" y="268" width="90.5" height="20" rx="2" fill="#5c5c5c"/>
<text x="1760" y="282.5" fill="#d6d6d6" font-size="11.5" font-family="Liberation Sans" font-weight="normal" text-anchor="middle" textLength="38" lengthAdjust="spacingAndGlyphs" >Physical</text>
<rect x="1811" y="268" width="90" height="20" rx="2" fill="#5c5c5c"/>
<text x="1856" y="282.5" fill="#d6d6d6" font-size="11.5" font-family="Liberation Sans" font-weight="normal" text-anchor="middle" textLength="32" lengthAdjust="spacingAndGlyphs" >Target</text>
<rect x="1715" y="293" width="90.5" height="20" rx="2" fill="#5c5c5c"/>
<text x="1760" y="307.5" fill="#d6d6d6" font-size="11.5" font-family="Liberation Sans" font-weight="normal" text-anchor="middle" textLength="21" lengthAdjust="spacingAndGlyphs" >Free</text>
<rect x="1710.5" y="322.5" width="195.5" height="46.5" rx="2" fill="#4b4b4b"/>
<polygon points="1716,329 1722,329 1719,333" fill="#cfcfcf" stroke="none" stroke-width="1" shape-rendering="geometricPrecision"/>
<text x="1729" y="336" fill="#f2f2f2" font-size="12" font-family="Liberation Sans" font-weight="bold" text-anchor="start" textLength="88" lengthAdjust="spacingAndGlyphs" >Name and Color</text>
<rect x="1892" y="328" width="1" height="1" fill="#888" />
<rect x="1892" y="330" width="1" height="1" fill="#888" />
<rect x="1892" y="332" width="1" height="1" fill="#888" />
<rect x="1894" y="328" width="1" height="1" fill="#888" />
<rect x="1894" y="330" width="1" height="1" fill="#888" />
<rect x="1894" y="332" width="1" height="1" fill="#888" />
<rect x="1896" y="328" width="1" height="1" fill="#888" />
<rect x="1896" y="330" width="1" height="1" fill="#888" />
<rect x="1896" y="332" width="1" height="1" fill="#888" />
<rect x="1715" y="344" width="161" height="20.5" fill="#595959" />
<text x="1719" y="358.5" fill="#e6e6e6" font-size="11.5" font-family="Liberation Sans" font-weight="normal" text-anchor="start" textLength="56" lengthAdjust="spacingAndGlyphs" >Camera001</text>
<rect x="1881" y="344.5" width="20" height="20" fill="#a4b8e8" stroke="#111" stroke-width="1.2"/>
<rect x="1909" y="221" width="5" height="685" rx="2.5" fill="#3e3e3e"/>
<g clip-path="url(#cTop)">
<defs><clipPath id="cTop"><rect x="342" y="122" width="677" height="392"/></clipPath><clipPath id="cFr"><rect x="1023" y="122" width="680" height="392"/></clipPath><clipPath id="cLf"><rect x="343" y="520" width="675" height="388"/></clipPath><clipPath id="cPr"><rect x="1025" y="520" width="676" height="387"/></clipPath></defs>
<text x="459" y="142" fill="#dadada" font-size="12" font-family="Liberation Sans" font-weight="normal" text-anchor="start" textLength="61" lengthAdjust="spacingAndGlyphs" >[Wireframe ]</text>
<polygon points="529,132.5 541,132.5 536.5,138 536.5,144 533.5,144 533.5,138" fill="#5e5e5e" stroke="none" stroke-width="1" shape-rendering="geometricPrecision"/>
<circle cx="962.5" cy="179" r="28.8" fill="none" stroke="#8a8e94" stroke-width="7" shape-rendering="geometricPrecision"/>
<circle cx="962.5" cy="179" r="25.5" fill="none" stroke="#2a2a2a" stroke-width="1" shape-rendering="geometricPrecision"/>
<rect x="947" y="164" width="31" height="31" fill="#8c8c8c" />
<rect x="952" y="170" width="21" height="19" fill="#959595" />
<text x="962.5" y="183" fill="#5a5a5a" font-size="8" font-family="Liberation Sans" font-weight="bold" text-anchor="middle" >TOP</text>
<text x="963" y="152" fill="#c4c4c4" font-size="12" font-family="Liberation Sans" font-weight="bold" text-anchor="middle" >N</text>
<text x="963" y="217" fill="#c4c4c4" font-size="12" font-family="Liberation Sans" font-weight="bold" text-anchor="middle" >S</text>
<text x="929" y="184" fill="#c4c4c4" font-size="12" font-family="Liberation Sans" font-weight="bold" text-anchor="middle" >W</text>
<text x="997" y="184" fill="#c4c4c4" font-size="12" font-family="Liberation Sans" font-weight="bold" text-anchor="middle" >E</text>
<rect x="515.5" y="177.5" width="384" height="265" fill="none" stroke="#3a2890" stroke-width="1.2" />
<rect x="604.5" y="264.5" width="162" height="117" fill="none" stroke="#ea8e2a" stroke-width="1.2" />
<rect x="609.5" y="269.5" width="152" height="110" fill="none" stroke="#ea8e2a" stroke-width="1" />
<line x1="604.5" y1="381.5" x2="766.5" y2="381.5" stroke="#f07a60" stroke-width="1.5" />
<line x1="682.5" y1="269" x2="682.5" y2="381" stroke="#ea8e2a" stroke-width="1" />
<line x1="687.5" y1="269" x2="687.5" y2="381" stroke="#ea8e2a" stroke-width="1" />
<rect x="609.5" y="269.5" width="27" height="50" fill="none" stroke="#ea8e2a" stroke-width="1" />
<path d="M637.5,282 V323.5 H609.5" fill="none" stroke="#ea8e2a" stroke-width="1" />
<rect x="733.5" y="269.5" width="28" height="50" fill="none" stroke="#ea8e2a" stroke-width="1" />
<path d="M731.5,282 V323.5 H761.5" fill="none" stroke="#ea8e2a" stroke-width="1" />
<line x1="609" y1="321.5" x2="637" y2="321.5" stroke="#ea8e2a" stroke-width="1" />
<line x1="733" y1="321.5" x2="761" y2="321.5" stroke="#ea8e2a" stroke-width="1" />
<rect x="654" y="268" width="16" height="3" fill="#2020c8" />
<rect x="700" y="268" width="16" height="3" fill="#2020c8" />
<rect x="633.5" y="271" width="3" height="12" fill="#2020c8" />
<rect x="734.5" y="271" width="3" height="12" fill="#2020c8" />
<rect x="673.5" y="305.5" width="24" height="2" fill="none" stroke="#ea8e2a" stroke-width="1" />
<rect x="674.5" y="307.5" width="8" height="57" fill="none" stroke="#d42222" stroke-width="1.5" />
<rect x="688.5" y="307.5" width="9" height="57" fill="none" stroke="#c82020" stroke-width="1.5" />
<rect x="644.5" y="320.5" width="4" height="5" fill="none" stroke="#ea8e2a" stroke-width="1" />
<rect x="722.5" y="320.5" width="4" height="5" fill="none" stroke="#ea8e2a" stroke-width="1" />
<rect x="644.5" y="376.5" width="4" height="5" fill="none" stroke="#ea8e2a" stroke-width="1" />
<rect x="722.5" y="376.5" width="4" height="5" fill="none" stroke="#ea8e2a" stroke-width="1" />
<polyline points="664,240 623.5,324 700,324 664,240" fill="none" stroke="#a6d4ec" stroke-width="1" shape-rendering="geometricPrecision"/>
<line x1="564" y1="231.5" x2="658" y2="231.5" stroke="#8a8a8a" stroke-width="1" />
<text x="564" y="231" fill="#8a8a8a" font-size="8" font-family="Liberation Sans" font-weight="normal" text-anchor="start" >z</text>
<line x1="661" y1="277" x2="661" y2="324" stroke="#6a8ad0" stroke-width="1.2" />
<rect x="657.5" y="320.5" width="8" height="8" fill="none" stroke="#6a8ad0" stroke-width="1" />
<line x1="662.5" y1="226" x2="662.5" y2="330" stroke="#a82828" stroke-width="1.5" />
<rect x="659.5" y="210.5" width="6" height="11" fill="none" stroke="#f0f0f0" stroke-width="1.3" />
<line x1="659.5" y1="213.5" x2="665.5" y2="213.5" stroke="#f0f0f0" stroke-width="1" />
<line x1="659.5" y1="216.5" x2="665.5" y2="216.5" stroke="#f0f0f0" stroke-width="1" />
<line x1="659.5" y1="219" x2="665.5" y2="219" stroke="#f0f0f0" stroke-width="1" />
<rect x="657.5" y="222.5" width="9" height="18" fill="none" stroke="#f0f0f0" stroke-width="1.3" />
<rect x="659.5" y="224.5" width="5" height="14" fill="none" stroke="#f0f0f0" stroke-width="1" />
<line x1="659.5" y1="228" x2="664.5" y2="228" stroke="#f0f0f0" stroke-width="1" />
<line x1="659.5" y1="233" x2="664.5" y2="233" stroke="#f0f0f0" stroke-width="1" />
<polyline points="666,234 671,235 668,238 666,238" fill="none" stroke="#f0f0f0" stroke-width="1.2" shape-rendering="geometricPrecision"/>
<rect x="659.5" y="241.5" width="5" height="10" fill="none" stroke="#f0f0f0" stroke-width="1.2" />
<line x1="662" y1="241" x2="662" y2="251" stroke="#f0f0f0" stroke-width="1" />
<polyline points="658,252 653,257.5 671,257.5 666,252" fill="none" stroke="#f0f0f0" stroke-width="1.3" shape-rendering="geometricPrecision"/>
</g>
<g clip-path="url(#cFr)">
<text x="1028" y="142" fill="#dadada" font-size="12" font-family="Liberation Sans" font-weight="normal" text-anchor="start" textLength="183" lengthAdjust="spacingAndGlyphs" >[+ ] [Front ] [Standard ] [Wireframe ]</text>
<polygon points="1221,132.5 1233,132.5 1228.5,138 1228.5,144 1225.5,144 1225.5,138" fill="#5e5e5e" stroke="none" stroke-width="1" shape-rendering="geometricPrecision"/>
<ellipse cx="1646.5" cy="196.5" rx="38" ry="2.2" fill="none" stroke="#7a7a7a" stroke-width="1.6" shape-rendering="geometricPrecision"/>
<ellipse cx="1646.5" cy="196.5" rx="31" ry="1.2" fill="#222" stroke="none" shape-rendering="geometricPrecision"/>
<rect x="1631" y="164" width="31" height="31" fill="#8c8c8c" />
<rect x="1637" y="170" width="19" height="19" fill="#828282" />
<text x="1646.5" y="182.5" fill="#555555" font-size="7.5" font-family="Liberation Sans" font-weight="bold" text-anchor="middle" textLength="21" lengthAdjust="spacingAndGlyphs" >FRONT</text>
<line x1="1025" y1="379.5" x2="1703" y2="379.5" stroke="#40209a" stroke-width="1.2" />
<line x1="1025" y1="388.5" x2="1703" y2="388.5" stroke="#40209a" stroke-width="1.2" />
<line x1="1120.5" y1="245.5" x2="1527.5" y2="245.5" stroke="#ea8e2a" stroke-width="1.2" />
<line x1="1120.5" y1="255.5" x2="1527.5" y2="255.5" stroke="#ea8e2a" stroke-width="1.2" />
<line x1="1120.5" y1="245" x2="1120.5" y2="388" stroke="#ea8e2a" stroke-width="1.2" />
<line x1="1527.5" y1="245" x2="1527.5" y2="388" stroke="#ea8e2a" stroke-width="1.2" />
<line x1="1132.5" y1="255" x2="1132.5" y2="378.5" stroke="#ea8e2a" stroke-width="1.2" />
<line x1="1195.5" y1="255" x2="1195.5" y2="378.5" stroke="#ea8e2a" stroke-width="1.2" />
<line x1="1204.5" y1="255" x2="1204.5" y2="378.5" stroke="#ea8e2a" stroke-width="1.2" />
<line x1="1218.5" y1="255" x2="1218.5" y2="378.5" stroke="#ea8e2a" stroke-width="1.2" />
<line x1="1230.5" y1="255" x2="1230.5" y2="378.5" stroke="#ea8e2a" stroke-width="1.2" />
<line x1="1293.5" y1="255" x2="1293.5" y2="378.5" stroke="#ea8e2a" stroke-width="1.2" />
<line x1="1317.5" y1="255" x2="1317.5" y2="378.5" stroke="#ea8e2a" stroke-width="1.2" />
<line x1="1329.5" y1="255" x2="1329.5" y2="378.5" stroke="#ea8e2a" stroke-width="1.2" />
<line x1="1354.5" y1="255" x2="1354.5" y2="378.5" stroke="#ea8e2a" stroke-width="1.2" />
<line x1="1416.5" y1="255" x2="1416.5" y2="378.5" stroke="#ea8e2a" stroke-width="1.2" />
<line x1="1428.5" y1="255" x2="1428.5" y2="378.5" stroke="#ea8e2a" stroke-width="1.2" />
<line x1="1443.5" y1="255" x2="1443.5" y2="378.5" stroke="#ea8e2a" stroke-width="1.2" />
<line x1="1451.5" y1="255" x2="1451.5" y2="378.5" stroke="#ea8e2a" stroke-width="1.2" />
<line x1="1514.5" y1="255" x2="1514.5" y2="378.5" stroke="#ea8e2a" stroke-width="1.2" />
<rect x="1134.5" y="256.5" width="83.0" height="121" fill="none" stroke="#9458a4" stroke-width="1" />
<rect x="1232.5" y="256.5" width="83.0" height="121" fill="none" stroke="#9458a4" stroke-width="1" />
<rect x="1332.5" y="256.5" width="83.0" height="121" fill="none" stroke="#9458a4" stroke-width="1" />
<rect x="1429.5" y="256.5" width="84.0" height="121" fill="none" stroke="#9458a4" stroke-width="1" />
<line x1="1196.5" y1="256" x2="1196.5" y2="378" stroke="#2626c4" stroke-width="1.5" />
<line x1="1249.5" y1="256" x2="1249.5" y2="378" stroke="#2626c4" stroke-width="1.5" />
<line x1="1285.5" y1="256" x2="1285.5" y2="378" stroke="#2626c4" stroke-width="1.5" />
<line x1="1361.5" y1="256" x2="1361.5" y2="378" stroke="#2626c4" stroke-width="1.5" />
<line x1="1399.5" y1="256" x2="1399.5" y2="378" stroke="#2626c4" stroke-width="1.5" />
<line x1="1448.5" y1="256" x2="1448.5" y2="378" stroke="#2626c4" stroke-width="1.5" />
<rect x="1298.5" y="275.5" width="18" height="34" fill="none" stroke="#d42222" stroke-width="1.2" />
<rect x="1329.5" y="275.5" width="20" height="34" fill="none" stroke="#d42222" stroke-width="1.2" />
<rect x="1297.5" y="346.5" width="19" height="29" fill="none" stroke="#d42222" stroke-width="1.2" />
<rect x="1329.5" y="346.5" width="21" height="29" fill="none" stroke="#d42222" stroke-width="1.2" />
<line x1="1266.5" y1="280" x2="1266.5" y2="372" stroke="#a83030" stroke-width="1.5" />
<text x="1264" y="281" fill="#c02a2a" font-size="9" font-family="Liberation Sans" font-weight="normal" text-anchor="start" >y</text>
<line x1="1171" y1="379.5" x2="1258" y2="379.5" stroke="#8a8a8a" stroke-width="1" />
<text x="1167" y="381" fill="#8a8a8a" font-size="8" font-family="Liberation Sans" font-weight="normal" text-anchor="start" >z</text>
<rect x="1166.5" y="325.5" width="194" height="109" fill="none" stroke="#a6d4ec" stroke-width="1.2" />
<line x1="1166.5" y1="325.5" x2="1360.5" y2="434.5" stroke="#a6d4ec" stroke-width="1" shape-rendering="geometricPrecision"/>
<line x1="1360.5" y1="325.5" x2="1166.5" y2="434.5" stroke="#a6d4ec" stroke-width="1" shape-rendering="geometricPrecision"/>
<rect x="1257" y="373" width="18" height="13" fill="#383838" />
<rect x="1256.5" y="373.5" width="18" height="13" fill="none" stroke="#f0f0f0" stroke-width="1.3" />
<rect x="1263.5" y="358.5" width="6" height="15" fill="none" stroke="#f0f0f0" stroke-width="1.2" />
<line x1="1263.5" y1="363" x2="1269.5" y2="363" stroke="#f0f0f0" stroke-width="1" />
<line x1="1263.5" y1="368" x2="1269.5" y2="368" stroke="#f0f0f0" stroke-width="1" />
<rect x="1259.5" y="376.5" width="8" height="7" fill="none" stroke="#8a8af0" stroke-width="1" />
<line x1="1265" y1="371" x2="1270" y2="377" stroke="#e02a2a" stroke-width="1.2" shape-rendering="geometricPrecision"/>
<line x1="1050" y1="485" x2="1050" y2="457" stroke="#2a2ad0" stroke-width="1.5" />
<line x1="1050" y1="485" x2="1072" y2="485" stroke="#c02a2a" stroke-width="1.5" />
<line x1="1050" y1="485" x2="1047" y2="488" stroke="#2a9a2a" stroke-width="1.5" shape-rendering="geometricPrecision"/>
<text x="1047" y="462" fill="#2a2ad0" font-size="9" font-family="Liberation Sans" font-weight="normal" text-anchor="start" >z</text>
<text x="1070" y="488" fill="#c02a2a" font-size="9" font-family="Liberation Sans" font-weight="normal" text-anchor="start" >x</text>
</g>
<g clip-path="url(#cLf)">
<text x="460" y="537" fill="#dadada" font-size="12" font-family="Liberation Sans" font-weight="normal" text-anchor="start" textLength="61" lengthAdjust="spacingAndGlyphs" >[Wireframe ]</text>
<polygon points="531,527.5 543,527.5 538.5,533 538.5,539 535.5,539 535.5,533" fill="#5e5e5e" stroke="none" stroke-width="1" shape-rendering="geometricPrecision"/>
<ellipse cx="962.5" cy="591.5" rx="38" ry="2.2" fill="none" stroke="#7a7a7a" stroke-width="1.6" shape-rendering="geometricPrecision"/>
<ellipse cx="962.5" cy="591.5" rx="31" ry="1.2" fill="#222" stroke="none" shape-rendering="geometricPrecision"/>
<rect x="947" y="559" width="31" height="31" fill="#8c8c8c" />
<rect x="953" y="565" width="19" height="19" fill="#828282" />
<text x="962.5" y="577.5" fill="#555555" font-size="7.5" font-family="Liberation Sans" font-weight="bold" text-anchor="middle" textLength="16" lengthAdjust="spacingAndGlyphs" >LEFT</text>
<line x1="343" y1="798.5" x2="1018" y2="798.5" stroke="#40209a" stroke-width="1.2" />
<line x1="343" y1="810.5" x2="1018" y2="810.5" stroke="#40209a" stroke-width="1.2" />
<line x1="472.5" y1="612.5" x2="879.5" y2="612.5" stroke="#ea8e2a" stroke-width="1.2" />
<line x1="472.5" y1="624.5" x2="879.5" y2="624.5" stroke="#ea8e2a" stroke-width="1.2" />
<line x1="472.5" y1="612" x2="472.5" y2="809" stroke="#ea8e2a" stroke-width="1.2" />
<line x1="879.5" y1="612" x2="879.5" y2="809" stroke="#ea8e2a" stroke-width="1.2" />
<line x1="490.5" y1="624" x2="490.5" y2="798" stroke="#ea8e2a" stroke-width="1.2" />
<line x1="614.5" y1="624" x2="614.5" y2="798" stroke="#ea8e2a" stroke-width="1.2" />
<line x1="620.5" y1="624" x2="620.5" y2="798" stroke="#ea8e2a" stroke-width="1.2" />
<line x1="664.5" y1="624" x2="664.5" y2="798" stroke="#ea8e2a" stroke-width="1.2" />
<line x1="669.5" y1="624" x2="669.5" y2="798" stroke="#ea8e2a" stroke-width="1.2" />
<line x1="676.5" y1="624" x2="676.5" y2="798" stroke="#ea8e2a" stroke-width="1.2" />
<line x1="683.5" y1="624" x2="683.5" y2="798" stroke="#ea8e2a" stroke-width="1.2" />
<line x1="863.5" y1="624" x2="863.5" y2="798" stroke="#ea8e2a" stroke-width="1.2" />
<line x1="487.5" y1="625" x2="487.5" y2="798" stroke="#2626c4" stroke-width="1.5" />
<line x1="497.5" y1="625" x2="497.5" y2="798" stroke="#2626c4" stroke-width="1.5" />
<line x1="533.5" y1="625" x2="533.5" y2="798" stroke="#2626c4" stroke-width="1.5" />
<line x1="876.5" y1="626" x2="876.5" y2="797" stroke="#c8d890" stroke-width="1" />
<rect x="621.5" y="652.5" width="200" height="46" fill="none" stroke="#d42222" stroke-width="1.2" />
<rect x="621.5" y="751.5" width="200" height="42" fill="none" stroke="#d42222" stroke-width="1.2" />
<line x1="357.5" y1="699" x2="357.5" y2="798" stroke="#a83030" stroke-width="1.5" />
<line x1="357.5" y1="798.5" x2="457" y2="798.5" stroke="#a83030" stroke-width="1.5" />
<text x="355" y="697" fill="#c02a2a" font-size="9" font-family="Liberation Sans" font-weight="normal" text-anchor="start" >y</text>
<text x="456" y="799" fill="#c02a2a" font-size="9" font-family="Liberation Sans" font-weight="normal" text-anchor="start" >x</text>
<polyline points="382,795 681,722.5 681,873 382,803" fill="none" stroke="#a6d4ec" stroke-width="1.3" shape-rendering="geometricPrecision"/>
<line x1="678.5" y1="724" x2="678.5" y2="872" stroke="#a6d4ec" stroke-width="1" />
<rect x="676.5" y="795.5" width="6" height="8" fill="none" stroke="#8a8af0" stroke-width="1" />
<path d="M357,776 L361.5,777.5 L364,781 L364,786 L361.5,790 L357,791 L352.5,790 L350,786 L350,781 L352.5,777.5 Z" fill="none" stroke="#f0f0f0" stroke-width="1.3" shape-rendering="geometricPrecision"/>
<path d="M342,784.5 H346 L350,789 M352,792.5 H357 M342,800.5 H346 L350,804.5 H365 L367,801.5" fill="none" stroke="#f0f0f0" stroke-width="1.3" shape-rendering="geometricPrecision"/>
<path d="M346,800 L349,797 M361,792 L366,795" fill="none" stroke="#f0f0f0" stroke-width="1.2" shape-rendering="geometricPrecision"/>
<rect x="366" y="794" width="12" height="9.5" fill="#dde6ea" />
<rect x="368" y="797.5" width="2" height="2" fill="#702020" />
<rect x="372" y="797.5" width="2" height="2" fill="#702020" />
<polyline points="378,793.5 382.5,791.5 382.5,805 378,803.5" fill="none" stroke="#f0f0f0" stroke-width="1.3" shape-rendering="geometricPrecision"/>
<rect x="376.5" y="794.5" width="1" height="8" fill="none" stroke="#222" stroke-width="0.6" />
<line x1="367" y1="881" x2="367" y2="853" stroke="#2a2ad0" stroke-width="1.5" />
<line x1="367" y1="881.5" x2="372" y2="881.5" stroke="#c02a2a" stroke-width="1.5" />
<line x1="367" y1="881.5" x2="343" y2="881.5" stroke="#2a9a2a" stroke-width="1.5" />
<text x="365" y="859" fill="#2a2ad0" font-size="9" font-family="Liberation Sans" font-weight="normal" text-anchor="start" >z</text>
<text x="343" y="885" fill="#2a9a2a" font-size="9" font-family="Liberation Sans" font-weight="normal" text-anchor="start" >y</text>
<text x="370" y="885" fill="#c02a2a" font-size="8" font-family="Liberation Sans" font-weight="normal" text-anchor="start" >x</text>
</g>
<g clip-path="url(#cPr)">
<text x="1028" y="537" fill="#dadada" font-size="12" font-family="Liberation Sans" font-weight="normal" text-anchor="start" textLength="239" lengthAdjust="spacingAndGlyphs" >[+ ] [Perspective ] [Standard ] [Default Shading ]</text>
<polygon points="1277,527.5 1289,527.5 1284.5,533 1284.5,539 1281.5,539 1281.5,533" fill="#5e5e5e" stroke="none" stroke-width="1" shape-rendering="geometricPrecision"/>
<polygon points="1089.5,704 1447,611.5 1637,718.5 1206.5,883" fill="#7428b4" stroke="none" stroke-width="1" shape-rendering="geometricPrecision"/>
<polygon points="1206.5,883 1637,718.5 1637,722 1207,886" fill="#4a1480" stroke="none" stroke-width="1" shape-rendering="geometricPrecision"/>
<polyline points="1089.5,704 1206.5,883" fill="none" stroke="#3c1070" stroke-width="1.5" shape-rendering="geometricPrecision"/>
<polygon points="1220,661.5 1285,725.5 1289.5,787.5 1225.5,697.5" fill="#4a3400" stroke="none" stroke-width="1" shape-rendering="geometricPrecision"/>
<polygon points="1285,725.5 1469,671.5 1465,728.5 1289.5,787.5" fill="#e8a400" stroke="none" stroke-width="1" shape-rendering="geometricPrecision"/>
<polygon points="1220,661.5 1387,620.5 1469,671.5 1285,725.5" fill="#e8a800" stroke="none" stroke-width="1" shape-rendering="geometricPrecision"/>
<polygon points="1292.7759999999998,729.52 1333.069,717.53 1335.0613,770.3389999999999 1296.3952,783.286" fill="#96cc00" stroke="none" stroke-width="1" shape-rendering="geometricPrecision"/>
<line x1="1293.2759999999998" y1="729.52" x2="1296.8952" y2="783.286" stroke="#9a9a60" stroke-width="0.8" shape-rendering="geometricPrecision"/>
<polygon points="1339.4792499999999,715.6225000000001 1378.30705,704.0685 1378.472785,755.80305 1341.212725,768.27925" fill="#96cc00" stroke="none" stroke-width="1" shape-rendering="geometricPrecision"/>
<line x1="1339.9792499999999" y1="715.6225000000001" x2="1341.712725" y2="768.27925" stroke="#9a9a60" stroke-width="0.8" shape-rendering="geometricPrecision"/>
<polygon points="1384.90045,702.1065 1421.3473,691.261 1419.77521,741.9733 1384.799965,753.68445" fill="#96cc00" stroke="none" stroke-width="1" shape-rendering="geometricPrecision"/>
<line x1="1385.40045" y1="702.1065" x2="1385.299965" y2="753.68445" stroke="#9a9a60" stroke-width="0.8" shape-rendering="geometricPrecision"/>
<polygon points="1426.4755,689.735 1462.55605,678.9985 1459.320085,728.73205 1424.69635,740.3255" fill="#96cc00" stroke="none" stroke-width="1" shape-rendering="geometricPrecision"/>
<line x1="1426.9755" y1="689.735" x2="1425.19635" y2="740.3255" stroke="#9a9a60" stroke-width="0.8" shape-rendering="geometricPrecision"/>
<line x1="1334.0035500000001" y1="732.5935" x2="1334.45815" y2="744.7315" stroke="#1a1a1a" stroke-width="1.3" stroke-dasharray="4,3" shape-rendering="geometricPrecision"/>
<line x1="1378.8564999999999" y1="703.905" x2="1378.89775" y2="718.7675" stroke="#1a1a1a" stroke-width="1.3" stroke-dasharray="4,3" shape-rendering="geometricPrecision"/>
<line x1="1421.6224" y1="694.0659999999999" x2="1420.8016" y2="720.292" stroke="#1a1a1a" stroke-width="1.3" stroke-dasharray="4,3" shape-rendering="geometricPrecision"/>
<line x1="1463.29275" y1="675.9775" x2="1461.42025" y2="704.5525" stroke="#1a1a1a" stroke-width="1.3" stroke-dasharray="4,3" shape-rendering="geometricPrecision"/>
<line x1="1266" y1="588" x2="1270.5" y2="688" stroke="#b42222" stroke-width="1.1" shape-rendering="geometricPrecision"/>
<text x="1262" y="596" fill="#d42a2a" font-size="9" font-family="Liberation Sans" font-weight="normal" text-anchor="start" >y</text>
<line x1="1270.5" y1="688" x2="1321" y2="727" stroke="#b42222" stroke-width="1.1" shape-rendering="geometricPrecision"/>
<text x="1318" y="731" fill="#8a2a2a" font-size="9" font-family="Liberation Sans" font-weight="normal" text-anchor="start" >x</text>
<line x1="1270.5" y1="688" x2="1178" y2="709" stroke="#8a8a7a" stroke-width="1" shape-rendering="geometricPrecision"/>
<text x="1172" y="713" fill="#8a8a8a" font-size="8" font-family="Liberation Sans" font-weight="normal" text-anchor="start" >z</text>
<ellipse cx="1646.5" cy="593" rx="32" ry="15.5" fill="none" stroke="#96989c" stroke-width="5" transform="rotate(-8 1646.5 593)" shape-rendering="geometricPrecision"/>
<polygon points="1627.5,560 1651,554 1666.5,564.5 1665,589 1641.5,597 1628,584.5" fill="#898989" stroke="none" stroke-width="1" shape-rendering="geometricPrecision"/>
<polygon points="1627.5,560 1651,554 1666.5,564.5 1642,571" fill="#8e8e8e" stroke="none" stroke-width="1" shape-rendering="geometricPrecision"/>
<text x="1613" y="604" fill="#b8b8b8" font-size="9" font-family="Liberation Sans" font-weight="bold" text-anchor="start" transform="rotate(30 1613 604)">W</text>
<text x="1670" y="583" fill="#b8b8b8" font-size="9" font-family="Liberation Sans" font-weight="bold" text-anchor="start" transform="rotate(-25 1670 583)">E</text>
<text x="1661" y="612" fill="#b8b8b8" font-size="9" font-family="Liberation Sans" font-weight="bold" text-anchor="start" transform="rotate(-20 1661 612)">S</text>
<line x1="1049" y1="882" x2="1049" y2="862" stroke="#2a2ad0" stroke-width="1.5" />
<line x1="1049" y1="882" x2="1073" y2="873" stroke="#c02a2a" stroke-width="1.5" shape-rendering="geometricPrecision"/>
<line x1="1049" y1="882" x2="1042" y2="872" stroke="#2a9a2a" stroke-width="1.5" shape-rendering="geometricPrecision"/>
<text x="1047" y="861" fill="#2a2ad0" font-size="9" font-family="Liberation Sans" font-weight="normal" text-anchor="start" >z</text>
<text x="1066" y="876" fill="#c02a2a" font-size="9" font-family="Liberation Sans" font-weight="normal" text-anchor="start" >x</text>
<text x="1038" y="875" fill="#2a9a2a" font-size="9" font-family="Liberation Sans" font-weight="normal" text-anchor="start" >y</text>
</g>
<rect x="7" y="834" width="19" height="19" rx="3" fill="#4e4e4e"/>
<polygon points="13,838 20,843.5 13,849" fill="#e8e8e8" stroke="none" stroke-width="1" shape-rendering="geometricPrecision"/>
<defs><linearGradient id="lb" x1="0" y1="0" x2="0" y2="1"><stop offset="0" stop-color="#4d5d74"/><stop offset="0.6" stop-color="#4a6ea0"/><stop offset="1" stop-color="#4a8ad8"/></linearGradient></defs>
<rect x="1" y="864" width="36" height="44" rx="3" fill="url(#lb)"/>
<rect x="4.5" y="871.5" width="14" height="13" rx="1" fill="#586272" stroke="#2a3242" stroke-width="1"/>
<rect x="19.5" y="871.5" width="14" height="13" rx="1" fill="#586272" stroke="#2a3242" stroke-width="1"/>
<rect x="4.5" y="886.5" width="14" height="13" rx="1" fill="#586272" stroke="#2a3242" stroke-width="1"/>
<rect x="19.5" y="886.5" width="14" height="13" rx="1" fill="#586272" stroke="#2a3242" stroke-width="1"/>
<path d="M45,606 V597 H47.5 V595 H50 V597 H53 V595 H55.5 V597 H58 V606 Z" fill="none" stroke="#e0e0e0" stroke-width="1.2" />
<rect x="51" y="580" width="1.5" height="3" fill="#e0e0e0" />
<rect x="65.5" y="580.5" width="270" height="302" fill="#454545" stroke="#3a3a3a" stroke-width="1" />
<rect x="45.5" y="885.5" width="145" height="22" fill="#454545" stroke="#5e5e5e" stroke-width="1"/>
<text x="48" y="901" fill="#e6e63a" font-size="12" font-family="Liberation Sans" font-weight="normal" text-anchor="start" textLength="38" lengthAdjust="spacingAndGlyphs" >Default</text>
<polygon points="194,895 200,895 197,898" fill="#111" stroke="none" stroke-width="1" shape-rendering="geometricPrecision"/>
<rect x="207" y="885" width="1.5" height="23" fill="#222" />
<polygon points="222,889 229,892.5 222,896 215,892.5" fill="#d8d8d8" stroke="none" stroke-width="1" shape-rendering="geometricPrecision"/>
<path d="M215,895.5 L222,899 L229,895.5 L229,897.5 L222,901 L215,897.5 Z" fill="#d8d8d8" stroke="none" stroke-width="1" shape-rendering="geometricPrecision"/>
<path d="M215,899.5 L222,903 L229,899.5 L229,901.5 L222,905 L215,901.5 Z" fill="#d8d8d8" stroke="none" stroke-width="1" shape-rendering="geometricPrecision"/>
<rect x="234" y="884" width="24" height="24" fill="#5585c6" />
<rect x="240.5" y="888.5" width="11" height="5" fill="#d8d8d8" stroke="#222" stroke-width="1" />
<line x1="246" y1="893.5" x2="246" y2="897" stroke="#d8d8d8" stroke-width="1.2" />
<path d="M240.5,900.5 V897 H251.5 V900.5" fill="none" stroke="#d8d8d8" stroke-width="1.2" />
<rect x="238.5" y="900.5" width="4" height="4" fill="#d8d8d8" stroke="#222" stroke-width="1" />
<rect x="249.5" y="900.5" width="4" height="4" fill="#d8d8d8" stroke="#222" stroke-width="1" />
<rect x="261" y="885" width="1.5" height="23" fill="#222" />
<text x="324" y="893" fill="#5a5a8c" font-size="13" font-family="Liberation Sans" font-weight="normal" text-anchor="start" >»</text>
<rect x="2" y="915" width="1" height="1.5" fill="#8a8a8a" />
<rect x="2" y="918" width="1" height="1.5" fill="#8a8a8a" />
<rect x="2" y="921" width="1" height="1.5" fill="#8a8a8a" />
<rect x="2" y="924" width="1" height="1.5" fill="#8a8a8a" />
<rect x="2" y="927" width="1" height="1.5" fill="#8a8a8a" />
<rect x="2" y="930" width="1" height="1.5" fill="#8a8a8a" />
<rect x="2" y="933" width="1" height="1.5" fill="#8a8a8a" />
<rect x="2" y="936" width="1" height="1.5" fill="#8a8a8a" />
<rect x="2" y="939" width="1" height="1.5" fill="#8a8a8a" />
<rect x="2" y="942" width="1" height="1.5" fill="#8a8a8a" />
<rect x="2" y="945" width="1" height="1.5" fill="#8a8a8a" />
<rect x="2" y="948" width="1" height="1.5" fill="#8a8a8a" />
<rect x="2" y="951" width="1" height="1.5" fill="#8a8a8a" />
<rect x="2" y="954" width="1" height="1.5" fill="#8a8a8a" />
<rect x="2" y="957" width="1" height="1.5" fill="#8a8a8a" />
<rect x="2" y="960" width="1" height="1.5" fill="#8a8a8a" />
<rect x="2" y="963" width="1" height="1.5" fill="#8a8a8a" />
<rect x="2" y="966" width="1" height="1.5" fill="#8a8a8a" />
<rect x="2" y="969" width="1" height="1.5" fill="#8a8a8a" />
<rect x="2" y="972" width="1" height="1.5" fill="#8a8a8a" />
<rect x="7" y="915" width="14" height="16" rx="2" fill="#555"/>
<text x="14" y="927.5" fill="#cfcfcf" font-size="12" font-family="Liberation Sans" font-weight="normal" text-anchor="middle" >&lt;</text>
<rect x="23" y="915" width="123" height="16" rx="2" fill="#5f5f5f"/>
<text x="84.5" y="927.5" fill="#d6d6d6" font-size="11.5" font-family="Liberation Sans" font-weight="normal" text-anchor="middle" textLength="37" lengthAdjust="spacingAndGlyphs" >0 / 100</text>
<rect x="148" y="915" width="14" height="16" rx="2" fill="#555"/>
<text x="155" y="927.5" fill="#cfcfcf" font-size="12" font-family="Liberation Sans" font-weight="normal" text-anchor="middle" >&gt;</text>
<rect x="6" y="936" width="50" height="37" fill="#454545" />
<rect x="6" y="936" width="1910" height="1" fill="#1e1e1e" />
<rect x="20" y="943" width="2" height="1" fill="#ddd" />
<rect x="20" y="945" width="2" height="1" fill="#ddd" />
<rect x="20" y="947" width="2" height="1" fill="#ddd" />
<rect x="20" y="949" width="2" height="1" fill="#ddd" />
<rect x="20" y="951" width="2" height="1" fill="#ddd" />
<rect x="20" y="953" width="2" height="1" fill="#ddd" />
<path d="M24,952 Q26,941 28,947 Q30,954 33,944" fill="none" stroke="#3fb8b8" stroke-width="1.5" shape-rendering="geometricPrecision"/>
<rect x="1867" y="937" width="49" height="36" fill="#454545" />
<line x1="64.5" y1="937" x2="64.5" y2="952" stroke="#8c8c8c" stroke-width="1" />
<line x1="81.5" y1="937" x2="81.5" y2="948" stroke="#8c8c8c" stroke-width="1" />
<line x1="99.5" y1="937" x2="99.5" y2="948" stroke="#8c8c8c" stroke-width="1" />
<line x1="117.5" y1="937" x2="117.5" y2="948" stroke="#8c8c8c" stroke-width="1" />
<line x1="135.5" y1="937" x2="135.5" y2="948" stroke="#8c8c8c" stroke-width="1" />
<line x1="153.5" y1="937" x2="153.5" y2="952" stroke="#8c8c8c" stroke-width="1" />
<line x1="171.5" y1="937" x2="171.5" y2="948" stroke="#8c8c8c" stroke-width="1" />
<line x1="189.5" y1="937" x2="189.5" y2="948" stroke="#8c8c8c" stroke-width="1" />
<line x1="207.5" y1="937" x2="207.5" y2="948" stroke="#8c8c8c" stroke-width="1" />
<line x1="225.5" y1="937" x2="225.5" y2="948" stroke="#8c8c8c" stroke-width="1" />
<line x1="243.5" y1="937" x2="243.5" y2="952" stroke="#8c8c8c" stroke-width="1" />
<line x1="261.5" y1="937" x2="261.5" y2="948" stroke="#8c8c8c" stroke-width="1" />
<line x1="279.5" y1="937" x2="279.5" y2="948" stroke="#8c8c8c" stroke-width="1" />
<line x1="297.5" y1="937" x2="297.5" y2="948" stroke="#8c8c8c" stroke-width="1" />
<line x1="315.5" y1="937" x2="315.5" y2="948" stroke="#8c8c8c" stroke-width="1" />
<line x1="333.5" y1="937" x2="333.5" y2="952" stroke="#8c8c8c" stroke-width="1" />
<line x1="351.5" y1="937" x2="351.5" y2="948" stroke="#8c8c8c" stroke-width="1" />
<line x1="369.5" y1="937" x2="369.5" y2="948" stroke="#8c8c8c" stroke-width="1" />
<line x1="387.5" y1="937" x2="387.5" y2="948" stroke="#8c8c8c" stroke-width="1" />
<line x1="405.5" y1="937" x2="405.5" y2="948" stroke="#8c8c8c" stroke-width="1" />
<line x1="423.5" y1="937" x2="423.5" y2="952" stroke="#8c8c8c" stroke-width="1" />
<line x1="441.5" y1="937" x2="441.5" y2="948" stroke="#8c8c8c" stroke-width="1" />
<line x1="459.5" y1="937" x2="459.5" y2="948" stroke="#8c8c8c" stroke-width="1" />
<line x1="477.5" y1="937" x2="477.5" y2="948" stroke="#8c8c8c" stroke-width="1" />
<line x1="495.5" y1="937" x2="495.5" y2="948" stroke="#8c8c8c" stroke-width="1" />
<line x1="513.5" y1="937" x2="513.5" y2="952" stroke="#8c8c8c" stroke-width="1" />
<line x1="531.5" y1="937" x2="531.5" y2="948" stroke="#8c8c8c" stroke-width="1" />
<line x1="549.5" y1="937" x2="549.5" y2="948" stroke="#8c8c8c" stroke-width="1" />
<line x1="567.5" y1="937" x2="567.5" y2="948" stroke="#8c8c8c" stroke-width="1" />
<line x1="585.5" y1="937" x2="585.5" y2="948" stroke="#8c8c8c" stroke-width="1" />
<line x1="603.5" y1="937" x2="603.5" y2="952" stroke="#8c8c8c" stroke-width="1" />
<line x1="621.5" y1="937" x2="621.5" y2="948" stroke="#8c8c8c" stroke-width="1" />
<line x1="639.5" y1="937" x2="639.5" y2="948" stroke="#8c8c8c" stroke-width="1" />
<line x1="657.5" y1="937" x2="657.5" y2="948" stroke="#8c8c8c" stroke-width="1" />
<line x1="674.5" y1="937" x2="674.5" y2="948" stroke="#8c8c8c" stroke-width="1" />
<line x1="692.5" y1="937" x2="692.5" y2="952" stroke="#8c8c8c" stroke-width="1" />
<line x1="710.5" y1="937" x2="710.5" y2="948" stroke="#8c8c8c" stroke-width="1" />
<line x1="728.5" y1="937" x2="728.5" y2="948" stroke="#8c8c8c" stroke-width="1" />
<line x1="746.5" y1="937" x2="746.5" y2="948" stroke="#8c8c8c" stroke-width="1" />
<line x1="764.5" y1="937" x2="764.5" y2="948" stroke="#8c8c8c" stroke-width="1" />
<line x1="782.5" y1="937" x2="782.5" y2="952" stroke="#8c8c8c" stroke-width="1" />
<line x1="800.5" y1="937" x2="800.5" y2="948" stroke="#8c8c8c" stroke-width="1" />
<line x1="818.5" y1="937" x2="818.5" y2="948" stroke="#8c8c8c" stroke-width="1" />
<line x1="836.5" y1="937" x2="836.5" y2="948" stroke="#8c8c8c" stroke-width="1" />
<line x1="854.5" y1="937" x2="854.5" y2="948" stroke="#8c8c8c" stroke-width="1" />
<line x1="872.5" y1="937" x2="872.5" y2="952" stroke="#8c8c8c" stroke-width="1" />
<line x1="890.5" y1="937" x2="890.5" y2="948" stroke="#8c8c8c" stroke-width="1" />
<line x1="908.5" y1="937" x2="908.5" y2="948" stroke="#8c8c8c" stroke-width="1" />
<line x1="926.5" y1="937" x2="926.5" y2="948" stroke="#8c8c8c" stroke-width="1" />
<line x1="944.5" y1="937" x2="944.5" y2="948" stroke="#8c8c8c" stroke-width="1" />
<line x1="962.5" y1="937" x2="962.5" y2="952" stroke="#8c8c8c" stroke-width="1" />
<line x1="980.5" y1="937" x2="980.5" y2="948" stroke="#8c8c8c" stroke-width="1" />
<line x1="998.5" y1="937" x2="998.5" y2="948" stroke="#8c8c8c" stroke-width="1" />
<line x1="1016.5" y1="937" x2="1016.5" y2="948" stroke="#8c8c8c" stroke-width="1" />
<line x1="1034.5" y1="937" x2="1034.5" y2="948" stroke="#8c8c8c" stroke-width="1" />
<line x1="1052.5" y1="937" x2="1052.5" y2="952" stroke="#8c8c8c" stroke-width="1" />
<line x1="1070.5" y1="937" x2="1070.5" y2="948" stroke="#8c8c8c" stroke-width="1" />
<line x1="1088.5" y1="937" x2="1088.5" y2="948" stroke="#8c8c8c" stroke-width="1" />
<line x1="1106.5" y1="937" x2="1106.5" y2="948" stroke="#8c8c8c" stroke-width="1" />
<line x1="1124.5" y1="937" x2="1124.5" y2="948" stroke="#8c8c8c" stroke-width="1" />
<line x1="1142.5" y1="937" x2="1142.5" y2="952" stroke="#8c8c8c" stroke-width="1" />
<line x1="1160.5" y1="937" x2="1160.5" y2="948" stroke="#8c8c8c" stroke-width="1" />
<line x1="1178.5" y1="937" x2="1178.5" y2="948" stroke="#8c8c8c" stroke-width="1" />
<line x1="1196.5" y1="937" x2="1196.5" y2="948" stroke="#8c8c8c" stroke-width="1" />
<line x1="1214.5" y1="937" x2="1214.5" y2="948" stroke="#8c8c8c" stroke-width="1" />
<line x1="1232.5" y1="937" x2="1232.5" y2="952" stroke="#8c8c8c" stroke-width="1" />
<line x1="1250.5" y1="937" x2="1250.5" y2="948" stroke="#8c8c8c" stroke-width="1" />
<line x1="1267.5" y1="937" x2="1267.5" y2="948" stroke="#8c8c8c" stroke-width="1" />
<line x1="1285.5" y1="937" x2="1285.5" y2="948" stroke="#8c8c8c" stroke-width="1" />
<line x1="1303.5" y1="937" x2="1303.5" y2="948" stroke="#8c8c8c" stroke-width="1" />
<line x1="1321.5" y1="937" x2="1321.5" y2="952" stroke="#8c8c8c" stroke-width="1" />
<line x1="1339.5" y1="937" x2="1339.5" y2="948" stroke="#8c8c8c" stroke-width="1" />
<line x1="1357.5" y1="937" x2="1357.5" y2="948" stroke="#8c8c8c" stroke-width="1" />
<line x1="1375.5" y1="937" x2="1375.5" y2="948" stroke="#8c8c8c" stroke-width="1" />
<line x1="1393.5" y1="937" x2="1393.5" y2="948" stroke="#8c8c8c" stroke-width="1" />
<line x1="1411.5" y1="937" x2="1411.5" y2="952" stroke="#8c8c8c" stroke-width="1" />
<line x1="1429.5" y1="937" x2="1429.5" y2="948" stroke="#8c8c8c" stroke-width="1" />
<line x1="1447.5" y1="937" x2="1447.5" y2="948" stroke="#8c8c8c" stroke-width="1" />
<line x1="1465.5" y1="937" x2="1465.5" y2="948" stroke="#8c8c8c" stroke-width="1" />
<line x1="1483.5" y1="937" x2="1483.5" y2="948" stroke="#8c8c8c" stroke-width="1" />
<line x1="1501.5" y1="937" x2="1501.5" y2="952" stroke="#8c8c8c" stroke-width="1" />
<line x1="1519.5" y1="937" x2="1519.5" y2="948" stroke="#8c8c8c" stroke-width="1" />
<line x1="1537.5" y1="937" x2="1537.5" y2="948" stroke="#8c8c8c" stroke-width="1" />
<line x1="1555.5" y1="937" x2="1555.5" y2="948" stroke="#8c8c8c" stroke-width="1" />
<line x1="1573.5" y1="937" x2="1573.5" y2="948" stroke="#8c8c8c" stroke-width="1" />
<line x1="1591.5" y1="937" x2="1591.5" y2="952" stroke="#8c8c8c" stroke-width="1" />
<line x1="1609.5" y1="937" x2="1609.5" y2="948" stroke="#8c8c8c" stroke-width="1" />
<line x1="1627.5" y1="937" x2="1627.5" y2="948" stroke="#8c8c8c" stroke-width="1" />
<line x1="1645.5" y1="937" x2="1645.5" y2="948" stroke="#8c8c8c" stroke-width="1" />
<line x1="1663.5" y1="937" x2="1663.5" y2="948" stroke="#8c8c8c" stroke-width="1" />
<line x1="1681.5" y1="937" x2="1681.5" y2="952" stroke="#8c8c8c" stroke-width="1" />
<line x1="1699.5" y1="937" x2="1699.5" y2="948" stroke="#8c8c8c" stroke-width="1" />
<line x1="1717.5" y1="937" x2="1717.5" y2="948" stroke="#8c8c8c" stroke-width="1" />
<line x1="1735.5" y1="937" x2="1735.5" y2="948" stroke="#8c8c8c" stroke-width="1" />
<line x1="1753.5" y1="937" x2="1753.5" y2="948" stroke="#8c8c8c" stroke-width="1" />
<line x1="1771.5" y1="937" x2="1771.5" y2="952" stroke="#8c8c8c" stroke-width="1" />
<line x1="1789.5" y1="937" x2="1789.5" y2="948" stroke="#8c8c8c" stroke-width="1" />
<line x1="1807.5" y1="937" x2="1807.5" y2="948" stroke="#8c8c8c" stroke-width="1" />
<line x1="1825.5" y1="937" x2="1825.5" y2="948" stroke="#8c8c8c" stroke-width="1" />
<line x1="1843.5" y1="937" x2="1843.5" y2="948" stroke="#8c8c8c" stroke-width="1" />
<line x1="1860.5" y1="937" x2="1860.5" y2="952" stroke="#8c8c8c" stroke-width="1" />
<text x="153.85" y="958" fill="#d0d0d0" font-size="11" font-family="Liberation Sans" font-weight="normal" text-anchor="middle" >5</text>
<text x="243.7" y="958" fill="#d0d0d0" font-size="11" font-family="Liberation Sans" font-weight="normal" text-anchor="middle" >10</text>
<text x="333.54999999999995" y="958" fill="#d0d0d0" font-size="11" font-family="Liberation Sans" font-weight="normal" text-anchor="middle" >15</text>
<text x="423.4" y="958" fill="#d0d0d0" font-size="11" font-family="Liberation Sans" font-weight="normal" text-anchor="middle" >20</text>
<text x="513.25" y="958" fill="#d0d0d0" font-size="11" font-family="Liberation Sans" font-weight="normal" text-anchor="middle" >25</text>
<text x="603.0999999999999" y="958" fill="#d0d0d0" font-size="11" font-family="Liberation Sans" font-weight="normal" text-anchor="middle" >30</text>
<text x="692.9499999999999" y="958" fill="#d0d0d0" font-size="11" font-family="Liberation Sans" font-weight="normal" text-anchor="middle" >35</text>
<text x="782.8" y="958" fill="#d0d0d0" font-size="11" font-family="Liberation Sans" font-weight="normal" text-anchor="middle" >40</text>
<text x="872.65" y="958" fill="#d0d0d0" font-size="11" font-family="Liberation Sans" font-weight="normal" text-anchor="middle" >45</text>
<text x="962.5" y="958" fill="#d0d0d0" font-size="11" font-family="Liberation Sans" font-weight="normal" text-anchor="middle" >50</text>
<text x="1052.35" y="958" fill="#d0d0d0" font-size="11" font-family="Liberation Sans" font-weight="normal" text-anchor="middle" >55</text>
<text x="1142.1999999999998" y="958" fill="#d0d0d0" font-size="11" font-family="Liberation Sans" font-weight="normal" text-anchor="middle" >60</text>
<text x="1232.05" y="958" fill="#d0d0d0" font-size="11" font-family="Liberation Sans" font-weight="normal" text-anchor="middle" >65</text>
<text x="1321.8999999999999" y="958" fill="#d0d0d0" font-size="11" font-family="Liberation Sans" font-weight="normal" text-anchor="middle" >70</text>
<text x="1411.75" y="958" fill="#d0d0d0" font-size="11" font-family="Liberation Sans" font-weight="normal" text-anchor="middle" >75</text>
<text x="1501.6" y="958" fill="#d0d0d0" font-size="11" font-family="Liberation Sans" font-weight="normal" text-anchor="middle" >80</text>
<text x="1591.4499999999998" y="958" fill="#d0d0d0" font-size="11" font-family="Liberation Sans" font-weight="normal" text-anchor="middle" >85</text>
<text x="1681.3" y="958" fill="#d0d0d0" font-size="11" font-family="Liberation Sans" font-weight="normal" text-anchor="middle" >90</text>
<text x="1771.1499999999999" y="958" fill="#d0d0d0" font-size="11" font-family="Liberation Sans" font-weight="normal" text-anchor="middle" >95</text>
<text x="1861.0" y="958" fill="#d0d0d0" font-size="11" font-family="Liberation Sans" font-weight="normal" text-anchor="middle" >100</text>
<rect x="60" y="938" width="7" height="22" fill="#9a9232" />
<text x="63.5" y="958" fill="#e8e060" font-size="11" font-family="Liberation Sans" font-weight="normal" text-anchor="middle" >0</text>
<rect x="56" y="961" width="1811" height="1" fill="#3a3a3a" />
<rect x="2.5" y="979.5" width="96" height="21" fill="#dcc6c6" stroke="#f2f2f2" stroke-width="1"/>
<rect x="2.5" y="1002.5" width="96" height="21" fill="#ffffff" stroke="#d8d8d8" stroke-width="1"/>
<text x="7" y="1015" fill="#111" font-size="11" font-family="Liberation Mono" font-weight="normal" text-anchor="start" textLength="86" lengthAdjust="spacingAndGlyphs" >Array modifi</text>
<rect x="102" y="975" width="1" height="53" fill="#5a5a5a" />
<rect x="103" y="975" width="1.5" height="53" fill="#151515" />
<text x="109" y="995.5" fill="#dedede" font-size="11.5" font-family="Liberation Sans" font-weight="normal" text-anchor="start" textLength="89" lengthAdjust="spacingAndGlyphs" >1 Camera Selected</text>
<text x="108" y="1021" fill="#dedede" font-size="11.5" font-family="Liberation Sans" font-weight="normal" text-anchor="start" textLength="186" lengthAdjust="spacingAndGlyphs" >Click or click-and-drag to select objects</text>
<path d="M1021,987 V984 H1024 M1036,984 H1039 V987 M1021,997 V1000 H1024 M1036,1000 H1039 V997" fill="none" stroke="#d8d8d8" stroke-width="1.3" />
<rect x="1028" y="986" width="4" height="4" fill="#3fb8b8" />
<polygon points="1024,996 1036,996 1032,991 1028,991" fill="#d8d8d8" stroke="none" stroke-width="1" shape-rendering="geometricPrecision"/>
<polygon points="1041,1002 1037,1002 1041,998" fill="#e0e0e0" stroke="none" stroke-width="1" />
<path d="M1052,992 V988 Q1052,983 1056,983 Q1060,983 1060,988 V992" fill="none" stroke="#d8d8d8" stroke-width="1.8" shape-rendering="geometricPrecision"/>
<rect x="1050" y="991" width="12" height="10" fill="#d8d8d8" />
<rect x="1055.5" y="994" width="1.5" height="4" fill="#444" />
<rect x="1075.5" y="984.5" width="14" height="14" fill="none" stroke="#d8d8d8" stroke-width="1.5" />
<circle cx="1082.5" cy="991.5" r="3" fill="none" stroke="#d8d8d8" stroke-width="1.5" shape-rendering="geometricPrecision"/>
<text x="1098" y="996" fill="#dedede" font-size="11.5" font-family="Liberation Sans" font-weight="normal" text-anchor="start" textLength="11" lengthAdjust="spacingAndGlyphs" >X:</text>
<rect x="1112" y="983" width="57" height="17" fill="#585858" />
<text x="1182" y="996" fill="#dedede" font-size="11.5" font-family="Liberation Sans" font-weight="normal" text-anchor="start" textLength="11" lengthAdjust="spacingAndGlyphs" >Y:</text>
<rect x="1196" y="983" width="57" height="17" fill="#585858" />
<text x="1267" y="996" fill="#dedede" font-size="11.5" font-family="Liberation Sans" font-weight="normal" text-anchor="start" textLength="10" lengthAdjust="spacingAndGlyphs" >Z:</text>
<rect x="1280" y="983" width="57" height="17" fill="#585858" />
<text x="1352" y="996" fill="#dedede" font-size="11.5" font-family="Liberation Sans" font-weight="normal" text-anchor="start" textLength="55" lengthAdjust="spacingAndGlyphs" >Grid = 10.0</text>
<rect x="1190" y="1008" width="1.5" height="16" fill="#111" />
<rect x="1197" y="1006" width="20" height="20" rx="2" fill="#5a5a5a"/>
<path d="M1201.5,1010 L1207,1008.5 L1212.5,1010 V1015 Q1212.5,1021 1207,1023 Q1201.5,1021 1201.5,1015 Z" fill="#d8d8d8" stroke="none" stroke-width="1" shape-rendering="geometricPrecision"/>
<path d="M1207,1010 V1022 M1202,1015.5 H1212" fill="none" stroke="#555" stroke-width="1.2" />
<text x="1222" y="1021" fill="#dedede" font-size="11.5" font-family="Liberation Sans" font-weight="normal" text-anchor="start" textLength="42" lengthAdjust="spacingAndGlyphs" >Enabled:</text>
<circle cx="1274.5" cy="1016.5" r="4.5" fill="#4ad04a" stroke="none" stroke-width="1" shape-rendering="geometricPrecision"/>
<rect x="1285" y="1006" width="20" height="20" rx="2" fill="#5a5a5a"/>
<circle cx="1295" cy="1016" r="6.5" fill="#eeeeee" stroke="none" stroke-width="1" shape-rendering="geometricPrecision"/>
<text x="1295" y="1020" fill="#333" font-size="9" font-family="Liberation Sans" font-weight="bold" text-anchor="middle" >1</text>
<rect x="1311" y="1008" width="1.5" height="16" fill="#111" />
<path d="M1326.5,1011 L1333,1014 V1021 L1326.5,1024 L1320,1021 V1014 Z M1320,1014 L1326.5,1017 L1333,1014 M1326.5,1017 V1024" fill="none" stroke="#d8d8d8" stroke-width="1.2" shape-rendering="geometricPrecision"/>
<text x="1343" y="1021" fill="#dedede" font-size="11.5" font-family="Liberation Sans" font-weight="normal" text-anchor="start" textLength="64" lengthAdjust="spacingAndGlyphs" >Add Time Tag</text>
<rect x="1465" y="985" width="2" height="11" fill="#d8d8d8" />
<polygon points="1474,985 1468,990.5 1474,996" fill="#d8d8d8" stroke="none" stroke-width="1" shape-rendering="geometricPrecision"/>
<polygon points="1480,985 1474,990.5 1480,996" fill="#d8d8d8" stroke="none" stroke-width="1" shape-rendering="geometricPrecision"/>
<rect x="1487" y="983" width="1.5" height="16" fill="#111" />
<polygon points="1499,985 1492,990.5 1499,996" fill="#d8d8d8" stroke="none" stroke-width="1" shape-rendering="geometricPrecision"/>
<rect x="1501" y="985" width="2" height="11" fill="#d8d8d8" />
<rect x="1505" y="985" width="2" height="11" fill="#d8d8d8" />
<polygon points="1516,984 1528,991 1516,998" fill="#d8d8d8" stroke="none" stroke-width="1" shape-rendering="geometricPrecision"/>
<polygon points="1531,1001 1527,1001 1531,997" fill="#e0e0e0" stroke="none" stroke-width="1" />
<rect x="1537" y="985" width="2" height="11" fill="#d8d8d8" />
<rect x="1541" y="985" width="2" height="11" fill="#d8d8d8" />
<polygon points="1545,985 1552,990.5 1545,996" fill="#d8d8d8" stroke="none" stroke-width="1" shape-rendering="geometricPrecision"/>
<rect x="1559" y="983" width="1.5" height="16" fill="#111" />
<polygon points="1563,985 1569,990.5 1563,996" fill="#d8d8d8" stroke="none" stroke-width="1" shape-rendering="geometricPrecision"/>
<polygon points="1569,985 1575,990.5 1569,996" fill="#d8d8d8" stroke="none" stroke-width="1" shape-rendering="geometricPrecision"/>
<rect x="1576" y="985" width="2" height="11" fill="#d8d8d8" />
<polygon points="1473,1008 1467,1013.5 1473,1019" fill="#d8d8d8" stroke="none" stroke-width="1" shape-rendering="geometricPrecision"/>
<polygon points="1475,1008 1481,1013.5 1475,1019" fill="#d8d8d8" stroke="none" stroke-width="1" shape-rendering="geometricPrecision"/>
<rect x="1487" y="1005" width="1.5" height="17" fill="#111" />
<rect x="1489" y="1005" width="68" height="17" fill="#585858" />
<text x="1493" y="1018" fill="#dcdcdc" font-size="11.5" font-family="Liberation Sans" font-weight="normal" text-anchor="start" >0</text>
<polygon points="1549,1009 1552,1006 1555,1009" fill="#d8d8d8" stroke="none" stroke-width="1" shape-rendering="geometricPrecision"/>
<polygon points="1549,1017 1552,1020 1555,1017" fill="#d8d8d8" stroke="none" stroke-width="1" shape-rendering="geometricPrecision"/>
<rect x="1560" y="1005" width="1.5" height="17" fill="#111" />
<circle cx="1570" cy="1010" r="5" fill="#d8d8d8" stroke="none" stroke-width="1" shape-rendering="geometricPrecision"/>
<path d="M1570,1007 V1010 H1573" fill="none" stroke="#444" stroke-width="1.2" />
<circle cx="1575" cy="1016" r="3.5" fill="#f0b020" stroke="none" stroke-width="1" shape-rendering="geometricPrecision"/>
<circle cx="1575" cy="1016" r="1.3" fill="#444" stroke="none" stroke-width="1" shape-rendering="geometricPrecision"/>
<rect x="1594" y="981" width="42" height="41" rx="3" fill="#585858"/>
<rect x="1602" y="992" width="24" height="5.5" fill="#dcdcdc" />
<rect x="1611" y="983" width="6" height="23" fill="#dcdcdc" />
<circle cx="1627" cy="1005" r="4" fill="none" stroke="#3fb8b8" stroke-width="2.5" shape-rendering="geometricPrecision"/>
<line x1="1624" y1="1008" x2="1617" y2="1015" stroke="#3fb8b8" stroke-width="2.5" shape-rendering="geometricPrecision"/>
<rect x="1641" y="981" width="45" height="19" rx="2" fill="#5a5a5a"/>
<text x="1663.5" y="995" fill="#dcdcdc" font-size="11.5" font-family="Liberation Sans" font-weight="normal" text-anchor="middle" textLength="43" lengthAdjust="spacingAndGlyphs" >Auto Key</text>
<rect x="1641" y="1003" width="45" height="19" rx="2" fill="#5a5a5a"/>
<text x="1663.5" y="1017" fill="#dcdcdc" font-size="11.5" font-family="Liberation Sans" font-weight="normal" text-anchor="middle" textLength="37" lengthAdjust="spacingAndGlyphs" >Set Key</text>
<rect x="1692" y="981" width="114" height="19" fill="#5a5a5a" />
<text x="1697" y="995" fill="#dcdcdc" font-size="11.5" font-family="Liberation Sans" font-weight="normal" text-anchor="start" textLength="41" lengthAdjust="spacingAndGlyphs" >Selected</text>
<polygon points="1793,989 1799,989 1796,993" fill="#e0e0e0" stroke="none" stroke-width="1" shape-rendering="geometricPrecision"/>
<path d="M1695,1021 Q1697,1010 1701,1009 M1711,1021 Q1709,1010 1705,1009" fill="none" stroke="#3fb8b8" stroke-width="2" shape-rendering="geometricPrecision"/>
<rect x="1701" y="1007" width="4" height="4" fill="#d8d8d8" />
<rect x="1694" y="1010" width="3" height="3" fill="#d8d8d8" />
<rect x="1709" y="1010" width="3" height="3" fill="#d8d8d8" />
<polygon points="1714,1024 1710,1024 1714,1020" fill="#e0e0e0" stroke="none" stroke-width="1" />
<rect x="1718" y="1003" width="88" height="19" rx="2" fill="#5a5a5a"/>
<text x="1762" y="1017" fill="#dcdcdc" font-size="11.5" font-family="Liberation Sans" font-weight="normal" text-anchor="middle" textLength="62" lengthAdjust="spacingAndGlyphs" >Key Filters...</text>
<circle cx="1829" cy="988" r="5" fill="none" stroke="#d8d8d8" stroke-width="2" shape-rendering="geometricPrecision"/>
<line x1="1825" y1="992" x2="1820" y2="998" stroke="#d8d8d8" stroke-width="2.5" shape-rendering="geometricPrecision"/>
<circle cx="1849" cy="991" r="4.5" fill="none" stroke="#d8d8d8" stroke-width="2" shape-rendering="geometricPrecision"/>
<line x1="1845" y1="995" x2="1842" y2="999" stroke="#d8d8d8" stroke-width="2.5" shape-rendering="geometricPrecision"/>
<rect x="1852" y="983" width="4" height="4" fill="#3fb8b8" />
<rect x="1857" y="983" width="3" height="4" fill="#3fb8b8" />
<rect x="1852" y="988" width="4" height="3" fill="#3fb8b8" />
<path d="M1866,987 V984 H1869 M1877,984 H1880 V987 M1866,997 V1000 H1869 M1877,1000 H1880 V997" fill="none" stroke="#3fb8b8" stroke-width="1.5" />
<polygon points="1873,985 1878,988 1878,994 1873,997 1868,994 1868,988" fill="#3fb8b8" stroke="none" stroke-width="1" shape-rendering="geometricPrecision"/>
<polygon points="1882,1002 1878,1002 1882,998" fill="#e0e0e0" stroke="none" stroke-width="1" />
<polygon points="1898,984 1904,987 1904,995 1898,998 1892,995 1892,987" fill="#3fb8b8" stroke="none" stroke-width="1" shape-rendering="geometricPrecision"/>
<polygon points="1889,990 1893,993 1889,996 1885,993" fill="#d8d8d8" stroke="none" stroke-width="1" shape-rendering="geometricPrecision"/>
<polygon points="1906,1002 1902,1002 1906,998" fill="#e0e0e0" stroke="none" stroke-width="1" />
<rect x="1820.5" y="1006.5" width="14" height="12" fill="none" stroke="#d8d8d8" stroke-width="1" stroke-dasharray="2,2"/>
<circle cx="1828" cy="1013" r="4" fill="none" stroke="#3fb8b8" stroke-width="1.8" shape-rendering="geometricPrecision"/>
<line x1="1825" y1="1016" x2="1820" y2="1021" stroke="#3fb8b8" stroke-width="2" shape-rendering="geometricPrecision"/>
<path d="M1845,1022 Q1842,1012 1844,1010 L1847,1013 V1005 H1849 V1012 V1004 H1851 V1012 V1005 H1853 V1012 V1007 H1855 V1016 Q1855,1022 1850,1022 Z" fill="#d8d8d8" stroke="none" stroke-width="1" shape-rendering="geometricPrecision"/>
<polygon points="1859,1025 1855,1025 1859,1021" fill="#e0e0e0" stroke="none" stroke-width="1" />
<path d="M1866,1020 Q1866,1008 1878,1006" fill="none" stroke="#d8d8d8" stroke-width="2" shape-rendering="geometricPrecision"/>
<ellipse cx="1873" cy="1014" rx="8" ry="4" fill="none" stroke="#d8d8d8" stroke-width="1.5" transform="rotate(-35 1873 1014)" shape-rendering="geometricPrecision"/>
<polygon points="1882,1025 1878,1025 1882,1021" fill="#e0e0e0" stroke="none" stroke-width="1" />
<rect x="1889" y="1007" width="15" height="15" fill="none" stroke="#d8d8d8" stroke-width="2" />
<line x1="1892" y1="1019" x2="1901" y2="1010" stroke="#d8d8d8" stroke-width="2" shape-rendering="geometricPrecision"/>
<polygon points="1897,1009 1902,1009 1902,1014" fill="#d8d8d8" stroke="none" stroke-width="1" shape-rendering="geometricPrecision"/>
<rect x="0" y="0" width="5" height="17" fill="#2a8cc4" />
<rect x="0" y="17" width="5" height="5" fill="#f0f0f0" />
<rect x="1" y="48" width="1" height="1" fill="#888" />
<rect x="1" y="50" width="1" height="1" fill="#888" />
<rect x="1" y="52" width="1" height="1" fill="#888" />
<rect x="1" y="54" width="1" height="1" fill="#888" />
<rect x="1" y="56" width="1" height="1" fill="#888" />
<rect x="1" y="58" width="1" height="1" fill="#888" />
<rect x="1" y="60" width="1" height="1" fill="#888" />
<rect x="1" y="62" width="1" height="1" fill="#888" />
<rect x="1" y="64" width="1" height="1" fill="#888" />
<rect x="1" y="66" width="1" height="1" fill="#888" />
<rect x="1" y="68" width="1" height="1" fill="#888" />
<rect x="1" y="70" width="1" height="1" fill="#888" />
<rect x="1" y="72" width="1" height="1" fill="#888" />
<rect x="1" y="74" width="1" height="1" fill="#888" />
<rect x="1" y="80" width="1" height="1" fill="#888" />
<rect x="1" y="82" width="1" height="1" fill="#888" />
<rect x="1" y="84" width="1" height="1" fill="#888" />
<rect x="1" y="86" width="1" height="1" fill="#888" />
<rect x="1" y="88" width="1" height="1" fill="#888" />
<rect x="1" y="90" width="1" height="1" fill="#888" />
<rect x="1" y="92" width="1" height="1" fill="#888" />
<rect x="1" y="94" width="1" height="1" fill="#888" />
<rect x="1" y="96" width="1" height="1" fill="#888" />
<rect x="1" y="98" width="1" height="1" fill="#888" />
<rect x="1" y="100" width="1" height="1" fill="#888" />
<rect x="1" y="102" width="1" height="1" fill="#888" />
<rect x="1" y="104" width="1" height="1" fill="#888" />
<rect x="1" y="106" width="1" height="1" fill="#888" />
<rect x="1" y="108" width="1" height="1" fill="#888" />
<rect x="1" y="110" width="1" height="1" fill="#888" />
<rect x="1" y="112" width="1" height="1" fill="#888" />
<rect x="1" y="114" width="1" height="1" fill="#888" />
<rect x="1" y="116" width="1" height="1" fill="#888" />
<rect x="1" y="118" width="1" height="1" fill="#888" />
<rect x="1" y="120" width="1" height="1" fill="#888" />
<rect x="1" y="122" width="1" height="1" fill="#888" />
<rect x="1" y="124" width="1" height="1" fill="#888" />
<rect x="1" y="126" width="1" height="1" fill="#888" />
<rect x="4.5" y="-3" width="453" height="583.5" rx="5" fill="#444444" stroke="#555555" stroke-width="1" shape-rendering="geometricPrecision"/>
<rect x="5" y="0" width="452" height="53" fill="#f0f0f0" />
<text x="14" y="17.5" fill="#8f8f8f" font-size="11.5" font-family="Liberation Sans" font-weight="normal" text-anchor="start" textLength="96" lengthAdjust="spacingAndGlyphs" >Select From Scene</text>
<rect x="437" y="6" width="19" height="18" fill="#dddddd" />
<line x1="443" y1="12" x2="449" y2="18" stroke="#f6f6f6" stroke-width="1" shape-rendering="geometricPrecision"/>
<line x1="449" y1="12" x2="443" y2="18" stroke="#f6f6f6" stroke-width="1" shape-rendering="geometricPrecision"/>
<text x="20" y="45" fill="#0a0a0a" font-size="12" font-family="Liberation Sans" font-weight="normal" text-anchor="start" textLength="31" lengthAdjust="spacingAndGlyphs" >Select</text>
<text x="70" y="45" fill="#0a0a0a" font-size="12" font-family="Liberation Sans" font-weight="normal" text-anchor="start" textLength="38" lengthAdjust="spacingAndGlyphs" >Display</text>
<text x="127" y="45" fill="#0a0a0a" font-size="12" font-family="Liberation Sans" font-weight="normal" text-anchor="start" textLength="56" lengthAdjust="spacingAndGlyphs" >Customize</text>
<rect x="5" y="53" width="452" height="4" fill="#353535" />
<rect x="5" y="57" width="452" height="523" fill="#444444" />
<rect x="8" y="57" width="230" height="22" fill="#5585c6" />
<circle cx="19" cy="67.5" r="5.8" fill="#d8d8d8" stroke="#2a2a2a" stroke-width="1" shape-rendering="geometricPrecision"/>
<circle cx="40" cy="66" r="5.3" fill="#d8d8d8" stroke="#2a2a2a" stroke-width="1" shape-rendering="geometricPrecision"/>
<rect x="39.5" y="65.5" width="10.5" height="9.5" fill="#d8d8d8" stroke="#2a2a2a" stroke-width="1"/>
<circle cx="40" cy="66" r="5.3" fill="none" stroke="#2a2a2a" stroke-width="1" shape-rendering="geometricPrecision"/>
<path d="M61,66 A5.5,5.5 0 1 1 70,66 Q68,68.5 68,71 H63 Q63,68.5 61,66 Z" fill="#d8d8d8" stroke="#2a2a2a" stroke-width="1" shape-rendering="geometricPrecision"/>
<rect x="63" y="72" width="5" height="1.3" fill="#d8d8d8" />
<rect x="64" y="74" width="3" height="1.3" fill="#d8d8d8" />
<rect x="80.5" y="63" width="11" height="10.5" rx="1.5" fill="#d8d8d8" stroke="#2a2a2a" stroke-width="1"/>
<polygon points="92.5,66 96,63.5 96,73 92.5,70.5" fill="#d8d8d8" stroke="#2a2a2a" stroke-width="0.8" shape-rendering="geometricPrecision"/>
<polygon points="103.5,61 103.5,75.5 119,75.5" fill="#d8d8d8" stroke="#2a2a2a" stroke-width="1" shape-rendering="geometricPrecision"/>
<polygon points="107,68 107,72.5 111.5,72.5" fill="#5585c6" stroke="none" stroke-width="1" shape-rendering="geometricPrecision"/>
<rect x="103.5" y="64" width="2" height="0.8" fill="#2a2a2a" />
<rect x="103.5" y="67" width="2" height="0.8" fill="#2a2a2a" />
<rect x="103.5" y="70" width="2" height="0.8" fill="#2a2a2a" />
<rect x="103.5" y="73" width="2" height="0.8" fill="#2a2a2a" />
<path d="M127,64 q3.8,-3 7.5,0 t7.5,0" fill="none" stroke="#2a2a2a" stroke-width="3" shape-rendering="geometricPrecision"/>
<path d="M127,64 q3.8,-3 7.5,0 t7.5,0" fill="none" stroke="#d8d8d8" stroke-width="1.6" shape-rendering="geometricPrecision"/>
<path d="M127,68 q3.8,-3 7.5,0 t7.5,0" fill="none" stroke="#2a2a2a" stroke-width="3" shape-rendering="geometricPrecision"/>
<path d="M127,68 q3.8,-3 7.5,0 t7.5,0" fill="none" stroke="#d8d8d8" stroke-width="1.6" shape-rendering="geometricPrecision"/>
<path d="M127,72 q3.8,-3 7.5,0 t7.5,0" fill="none" stroke="#2a2a2a" stroke-width="3" shape-rendering="geometricPrecision"/>
<path d="M127,72 q3.8,-3 7.5,0 t7.5,0" fill="none" stroke="#d8d8d8" stroke-width="1.6" shape-rendering="geometricPrecision"/>
<rect x="150" y="61" width="15" height="14.5" fill="#5585c6" stroke="#145050" stroke-width="2.2" />
<rect x="150" y="61" width="15" height="14.5" fill="none" stroke="#2aa8a8" stroke-width="1.2" />
<circle cx="155.5" cy="66" r="3.5" fill="#d8d8d8" stroke="#2a2a2a" stroke-width="0.8" shape-rendering="geometricPrecision"/>
<rect x="155.5" y="66" width="6.5" height="6.5" fill="#d8d8d8" stroke="#2a2a2a" stroke-width="0.8"/>
<circle cx="180" cy="68" r="7.3" fill="#d8d8d8" stroke="#2a2a2a" stroke-width="1" shape-rendering="geometricPrecision"/>
<polygon points="177.5,63.5 182.5,63.5 182.5,67.5 185,67.5 180,72.5 175,67.5 177.5,67.5" fill="#2a9a9a" stroke="#2a2a2a" stroke-width="0.6" shape-rendering="geometricPrecision"/>
<rect x="175" y="73" width="10" height="1.5" fill="#2a9a9a" />
<path d="M196,63 Q196,60 199,60.5 Q201.5,61 201,63.5 L210.5,74.5 L209,76 L198,65.5 Q195.8,65.5 196,63 Z" fill="#d8d8d8" stroke="#2a2a2a" stroke-width="1" shape-rendering="geometricPrecision"/>
<rect x="219.5" y="62" width="13.5" height="3" fill="#d8d8d8" stroke="#2a2a2a" stroke-width="0.8"/>
<rect x="220.8" y="65.2" width="11" height="8.5" fill="none" stroke="#d8d8d8" stroke-width="1.6" />
<rect x="223.5" y="67.5" width="5.5" height="1.5" fill="#d8d8d8" />
<line x1="250" y1="62" x2="250" y2="74" stroke="#d8d8d8" stroke-width="1.5" transform="rotate(0 250 68)" shape-rendering="geometricPrecision"/>
<line x1="250" y1="62" x2="250" y2="74" stroke="#d8d8d8" stroke-width="1.5" transform="rotate(60 250 68)" shape-rendering="geometricPrecision"/>
<line x1="250" y1="62" x2="250" y2="74" stroke="#d8d8d8" stroke-width="1.5" transform="rotate(120 250 68)" shape-rendering="geometricPrecision"/>
<path d="M265,68 Q272,61 279,68 Q272,75 265,68 Z" fill="#dcdcdc" stroke="none" stroke-width="1" shape-rendering="geometricPrecision"/>
<circle cx="272" cy="68" r="2.8" fill="#3a3a3a" stroke="none" stroke-width="1" shape-rendering="geometricPrecision"/>
<circle cx="272.6" cy="67.4" r="1" fill="#dcdcdc" stroke="none" stroke-width="1" shape-rendering="geometricPrecision"/>
<rect x="287.5" y="58" width="1.2" height="21" fill="#1e1e1e" />
<rect x="295" y="61" width="13" height="15" fill="#d8d8d8" />
<rect x="297.5" y="64" width="8" height="1.2" fill="#444" />
<rect x="297.5" y="67" width="8" height="1.2" fill="#444" />
<rect x="297.5" y="70" width="8" height="1.2" fill="#444" />
<rect x="318" y="61" width="13" height="15" fill="#d8d8d8" />
<rect x="341.5" y="61.5" width="12" height="14" fill="none" stroke="#d8d8d8" stroke-width="1.5" />
<rect x="344" y="65" width="5" height="1.2" fill="#d8d8d8" />
<rect x="344" y="68" width="7" height="1.2" fill="#d8d8d8" />
<rect x="344" y="71" width="5" height="1.2" fill="#d8d8d8" />
<rect x="362.5" y="58" width="1.2" height="21" fill="#1e1e1e" />
<polygon points="369,61 384,61 378,69 378,74 375,75 375,69" fill="#8a8a8a" stroke="none" stroke-width="1" shape-rendering="geometricPrecision"/>
<circle cx="381" cy="72" r="3" fill="#8a8a8a" stroke="#444" stroke-width="1" shape-rendering="geometricPrecision"/>
<polygon points="392,61 406,61 400.5,68 400.5,75 397.5,75 397.5,68" fill="#d8d8d8" stroke="none" stroke-width="1" shape-rendering="geometricPrecision"/>
<path d="M415.5,74.5 V63.5 H418 V61.5 H421 V63.5 H423 V61.5 H426 V63.5 H428.5 V74.5 Z" fill="none" stroke="#d8d8d8" stroke-width="1.3" />
<rect x="9" y="83" width="150" height="22" fill="#474747" stroke="#5e5e5e" stroke-width="1"/>
<line x1="165" y1="88" x2="175" y2="98" stroke="#8c8c8c" stroke-width="2" shape-rendering="geometricPrecision"/>
<line x1="175" y1="88" x2="165" y2="98" stroke="#8c8c8c" stroke-width="2" shape-rendering="geometricPrecision"/>
<rect x="184" y="82" width="24" height="24" fill="#5585c6" />
<polygon points="188,87 203,87 198,95 198,101 194,103 194,95" fill="#d8d8d8" stroke="none" stroke-width="1" shape-rendering="geometricPrecision"/>
<polygon points="197,96 201,92 201,94 205,94 205,98 201,98 201,100" fill="#2aa8a8" stroke="none" stroke-width="1" shape-rendering="geometricPrecision"/>
<rect x="211" y="83" width="1.5" height="21" fill="#222" />
<polygon points="226,86 233,89.5 226,93 219,89.5" fill="#d8d8d8" stroke="none" stroke-width="1" shape-rendering="geometricPrecision"/>
<path d="M219,92.5 L226,96 L233,92.5 L233,94.5 L226,98 L219,94.5 Z" fill="#d8d8d8" stroke="none" stroke-width="1" shape-rendering="geometricPrecision"/>
<path d="M219,96.5 L226,100 L233,96.5 L233,98.5 L226,102 L219,98.5 Z" fill="#d8d8d8" stroke="none" stroke-width="1" shape-rendering="geometricPrecision"/>
<rect x="238" y="82.5" width="23.5" height="23.5" fill="#5585c6" />
<rect x="244.5" y="86.5" width="11" height="5" fill="#d8d8d8" stroke="#222" stroke-width="1" />
<line x1="250" y1="91.5" x2="250" y2="95" stroke="#d8d8d8" stroke-width="1.2" />
<path d="M244.5,98.5 V95 H255.5 V98.5" fill="none" stroke="#d8d8d8" stroke-width="1.2" />
<rect x="242.5" y="98.5" width="4" height="4" fill="#d8d8d8" stroke="#222" stroke-width="1" />
<rect x="253.5" y="98.5" width="4" height="4" fill="#d8d8d8" stroke="#222" stroke-width="1" />
<text x="265" y="97.7" fill="#ececec" font-size="12" font-family="Liberation Sans" font-weight="normal" text-anchor="start" textLength="69" lengthAdjust="spacingAndGlyphs" >Selection Set:</text>
<text x="446" y="91" fill="#5a5a8c" font-size="13" font-family="Liberation Sans" font-weight="normal" text-anchor="start" >»</text>
<rect x="6" y="109" width="451" height="20" fill="#424242" stroke="#585858" stroke-width="1"/>
<text x="8.5" y="123" fill="#ececec" font-size="11.5" font-family="Liberation Sans" font-weight="normal" text-anchor="start" textLength="122" lengthAdjust="spacingAndGlyphs" >Name (Sorted Ascending)</text>
<polygon points="450,122 456,122 456,116" fill="#e6e6e6" stroke="none" stroke-width="1" shape-rendering="geometricPrecision"/>
<rect x="6" y="129" width="451" height="391" fill="#464646" />
<rect x="6" y="129" width="50" height="182" fill="#3e3e3e" />
<line x1="15.5" y1="139" x2="15.5" y2="301" stroke="#6a6a6a" stroke-width="1" stroke-dasharray="1,2"/>
<rect x="56" y="130" width="401" height="18" fill="#4e4e4e" />
<line x1="16" y1="139" x2="24" y2="139" stroke="#6a6a6a" stroke-width="1" stroke-dasharray="1,2"/>
<path d="M25,139 Q32,132 39,139 Q32,146 25,139 Z" fill="#dcdcdc" stroke="none" stroke-width="1" shape-rendering="geometricPrecision"/>
<circle cx="32" cy="139" r="2.8" fill="#3a3a3a" stroke="none" stroke-width="1" shape-rendering="geometricPrecision"/>
<circle cx="32.6" cy="138.4" r="1" fill="#dcdcdc" stroke="none" stroke-width="1" shape-rendering="geometricPrecision"/>
<circle cx="47" cy="139" r="5" fill="#dcdcdc" stroke="none" stroke-width="1" shape-rendering="geometricPrecision"/>
<text x="59.5" y="143" fill="#f0f0f0" font-size="11" font-family="Liberation Sans" font-weight="normal" text-anchor="start" >Box001</text>
<rect x="56" y="148" width="401" height="18" fill="#7f7f7f" />
<line x1="16" y1="157" x2="24" y2="157" stroke="#6a6a6a" stroke-width="1" stroke-dasharray="1,2"/>
<path d="M25,157 Q32,150 39,157 Q32,164 25,157 Z" fill="#dcdcdc" stroke="none" stroke-width="1" shape-rendering="geometricPrecision"/>
<circle cx="32" cy="157" r="2.8" fill="#3a3a3a" stroke="none" stroke-width="1" shape-rendering="geometricPrecision"/>
<circle cx="32.6" cy="156.4" r="1" fill="#dcdcdc" stroke="none" stroke-width="1" shape-rendering="geometricPrecision"/>
<rect x="40" y="152.5" width="10" height="9" fill="#dcdcdc" />
<polygon points="51,154.5 54,152.0 54,162.0 51,159.5" fill="#dcdcdc" stroke="none" stroke-width="1" shape-rendering="geometricPrecision"/>
<text x="59.5" y="161" fill="#f0f0f0" font-size="11" font-family="Liberation Sans" font-weight="normal" text-anchor="start" >Camera001</text>
<rect x="56" y="166" width="401" height="18" fill="#7f7f7f" />
<line x1="16" y1="175" x2="24" y2="175" stroke="#6a6a6a" stroke-width="1" stroke-dasharray="1,2"/>
<path d="M25,175 Q32,168 39,175 Q32,182 25,175 Z" fill="#dcdcdc" stroke="none" stroke-width="1" shape-rendering="geometricPrecision"/>
<circle cx="32" cy="175" r="2.8" fill="#3a3a3a" stroke="none" stroke-width="1" shape-rendering="geometricPrecision"/>
<circle cx="32.6" cy="174.4" r="1" fill="#dcdcdc" stroke="none" stroke-width="1" shape-rendering="geometricPrecision"/>
<rect x="40" y="170.5" width="10" height="9" fill="#dcdcdc" />
<polygon points="51,172.5 54,170.0 54,180.0 51,177.5" fill="#dcdcdc" stroke="none" stroke-width="1" shape-rendering="geometricPrecision"/>
<text x="59.5" y="179" fill="#f0f0f0" font-size="11" font-family="Liberation Sans" font-weight="normal" text-anchor="start" >Camera001.Target</text>
<rect x="56" y="184" width="401" height="18" fill="#595959" />
<line x1="16" y1="193" x2="24" y2="193" stroke="#6a6a6a" stroke-width="1" stroke-dasharray="1,2"/>
<path d="M25,193 Q32,186 39,193 Q32,200 25,193 Z" fill="#dcdcdc" stroke="none" stroke-width="1" shape-rendering="geometricPrecision"/>
<circle cx="32" cy="193" r="2.8" fill="#3a3a3a" stroke="none" stroke-width="1" shape-rendering="geometricPrecision"/>
<circle cx="32.6" cy="192.4" r="1" fill="#dcdcdc" stroke="none" stroke-width="1" shape-rendering="geometricPrecision"/>
<circle cx="47" cy="193" r="5" fill="#dcdcdc" stroke="none" stroke-width="1" shape-rendering="geometricPrecision"/>
<text x="59.5" y="197" fill="#f0f0f0" font-size="11" font-family="Liberation Sans" font-weight="normal" text-anchor="start" >Layer:armarios</text>
<rect x="56" y="202" width="401" height="18" fill="#4f4f4f" />
<line x1="16" y1="211" x2="24" y2="211" stroke="#6a6a6a" stroke-width="1" stroke-dasharray="1,2"/>
<path d="M25,211 Q32,204 39,211 Q32,218 25,211 Z" fill="#dcdcdc" stroke="none" stroke-width="1" shape-rendering="geometricPrecision"/>
<circle cx="32" cy="211" r="2.8" fill="#3a3a3a" stroke="none" stroke-width="1" shape-rendering="geometricPrecision"/>
<circle cx="32.6" cy="210.4" r="1" fill="#dcdcdc" stroke="none" stroke-width="1" shape-rendering="geometricPrecision"/>
<circle cx="47" cy="211" r="5" fill="#dcdcdc" stroke="none" stroke-width="1" shape-rendering="geometricPrecision"/>
<text x="59.5" y="215" fill="#f0f0f0" font-size="11" font-family="Liberation Sans" font-weight="normal" text-anchor="start" >Layer:caixilhos</text>
<rect x="56" y="220" width="401" height="18" fill="#595959" />
<line x1="16" y1="229" x2="24" y2="229" stroke="#6a6a6a" stroke-width="1" stroke-dasharray="1,2"/>
<path d="M25,229 Q32,222 39,229 Q32,236 25,229 Z" fill="#dcdcdc" stroke="none" stroke-width="1" shape-rendering="geometricPrecision"/>
<circle cx="32" cy="229" r="2.8" fill="#3a3a3a" stroke="none" stroke-width="1" shape-rendering="geometricPrecision"/>
<circle cx="32.6" cy="228.4" r="1" fill="#dcdcdc" stroke="none" stroke-width="1" shape-rendering="geometricPrecision"/>
<circle cx="47" cy="229" r="5" fill="#dcdcdc" stroke="none" stroke-width="1" shape-rendering="geometricPrecision"/>
<text x="59.5" y="233" fill="#f0f0f0" font-size="11" font-family="Liberation Sans" font-weight="normal" text-anchor="start" >Layer:lajes</text>
<rect x="56" y="238" width="401" height="18" fill="#4f4f4f" />
<line x1="16" y1="247" x2="24" y2="247" stroke="#6a6a6a" stroke-width="1" stroke-dasharray="1,2"/>
<path d="M25,247 Q32,240 39,247 Q32,254 25,247 Z" fill="#dcdcdc" stroke="none" stroke-width="1" shape-rendering="geometricPrecision"/>
<circle cx="32" cy="247" r="2.8" fill="#3a3a3a" stroke="none" stroke-width="1" shape-rendering="geometricPrecision"/>
<circle cx="32.6" cy="246.4" r="1" fill="#dcdcdc" stroke="none" stroke-width="1" shape-rendering="geometricPrecision"/>
<circle cx="47" cy="247" r="5" fill="#dcdcdc" stroke="none" stroke-width="1" shape-rendering="geometricPrecision"/>
<text x="59.5" y="251" fill="#f0f0f0" font-size="11" font-family="Liberation Sans" font-weight="normal" text-anchor="start" >Layer:paredes</text>
<rect x="56" y="256" width="401" height="18" fill="#595959" />
<line x1="16" y1="265" x2="24" y2="265" stroke="#6a6a6a" stroke-width="1" stroke-dasharray="1,2"/>
<path d="M25,265 Q32,258 39,265 Q32,272 25,265 Z" fill="#dcdcdc" stroke="none" stroke-width="1" shape-rendering="geometricPrecision"/>
<circle cx="32" cy="265" r="2.8" fill="#3a3a3a" stroke="none" stroke-width="1" shape-rendering="geometricPrecision"/>
<circle cx="32.6" cy="264.4" r="1" fill="#dcdcdc" stroke="none" stroke-width="1" shape-rendering="geometricPrecision"/>
<circle cx="47" cy="265" r="5" fill="#dcdcdc" stroke="none" stroke-width="1" shape-rendering="geometricPrecision"/>
<text x="59.5" y="269" fill="#f0f0f0" font-size="11" font-family="Liberation Sans" font-weight="normal" text-anchor="start" >Layer:portas</text>
<rect x="56" y="274" width="401" height="18" fill="#4f4f4f" />
<line x1="16" y1="283" x2="24" y2="283" stroke="#6a6a6a" stroke-width="1" stroke-dasharray="1,2"/>
<path d="M25,283 Q32,276 39,283 Q32,290 25,283 Z" fill="#dcdcdc" stroke="none" stroke-width="1" shape-rendering="geometricPrecision"/>
<circle cx="32" cy="283" r="2.8" fill="#3a3a3a" stroke="none" stroke-width="1" shape-rendering="geometricPrecision"/>
<circle cx="32.6" cy="282.4" r="1" fill="#dcdcdc" stroke="none" stroke-width="1" shape-rendering="geometricPrecision"/>
<circle cx="46" cy="281" r="4.5" fill="none" stroke="#dcdcdc" stroke-width="1.5" shape-rendering="geometricPrecision"/>
<rect x="47" y="282" width="7" height="7" fill="#dcdcdc" stroke="#333" stroke-width="0.6"/>
<text x="59.5" y="287" fill="#f0f0f0" font-size="11" font-family="Liberation Sans" font-weight="normal" text-anchor="start" >Layer:vidros</text>
<rect x="56" y="292" width="401" height="18" fill="#595959" />
<line x1="16" y1="301" x2="24" y2="301" stroke="#6a6a6a" stroke-width="1" stroke-dasharray="1,2"/>
<path d="M25,301 Q32,294 39,301 Q32,308 25,301 Z" fill="#dcdcdc" stroke="none" stroke-width="1" shape-rendering="geometricPrecision"/>
<circle cx="32" cy="301" r="2.8" fill="#3a3a3a" stroke="none" stroke-width="1" shape-rendering="geometricPrecision"/>
<circle cx="32.6" cy="300.4" r="1" fill="#dcdcdc" stroke="none" stroke-width="1" shape-rendering="geometricPrecision"/>
<circle cx="47" cy="301" r="5" fill="#dcdcdc" stroke="none" stroke-width="1" shape-rendering="geometricPrecision"/>
<text x="59.5" y="305" fill="#f0f0f0" font-size="11" font-family="Liberation Sans" font-weight="normal" text-anchor="start" >Layer:vidros</text>
<rect x="6" y="521" width="451" height="17" fill="#f0f0f0" />
<rect x="23" y="529" width="408" height="2" fill="#707070" />
<rect x="290" y="546" width="73" height="21" rx="2" fill="#5e5e5e"/>
<text x="326.5" y="561" fill="#e6e6e6" font-size="11.5" font-family="Liberation Sans" font-weight="normal" text-anchor="middle" >OK</text>
<rect x="370" y="546" width="74" height="21" rx="2" fill="#5e5e5e"/>
<text x="407" y="561" fill="#e6e6e6" font-size="11.5" font-family="Liberation Sans" font-weight="normal" text-anchor="middle" textLength="35" lengthAdjust="spacingAndGlyphs" >Cancel</text>
</svg></body></html>
